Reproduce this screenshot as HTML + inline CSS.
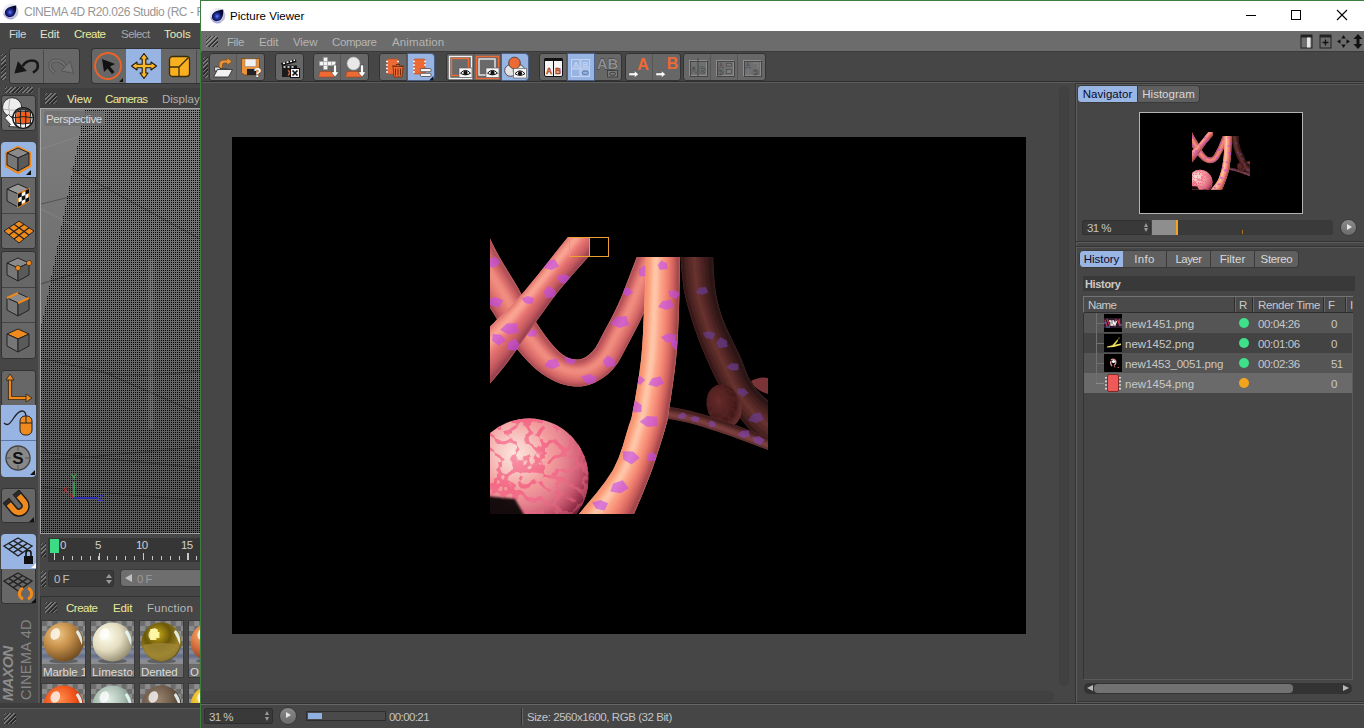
<!DOCTYPE html>
<html><head><meta charset="utf-8">
<style>
*{box-sizing:border-box;margin:0;padding:0}
html,body{width:1364px;height:728px;overflow:hidden;background:#464646;font-family:"Liberation Sans",sans-serif;font-size:11.5px;color:#d0d0d0}
.a{position:absolute}
.t{position:absolute;white-space:nowrap;line-height:14px}
.grip{position:absolute;background:repeating-linear-gradient(135deg,#2a2a2a 0 1px,#777 1px 2px,#464646 2px 3px)}
.btn{position:absolute;background:#676767;border:1px solid #333;border-radius:3px}
.hl{background:#98b4e3}
.tab{position:absolute;height:18px;line-height:16px;background:#5f5f5f;border:1px solid #3a3a3a;font-size:11.5px;white-space:nowrap;text-align:center;color:#d8d8d8}
.tab.on{background:#9ab6e4;color:#0a0a2a}
</style></head><body>

<!-- ================= MAIN C4D WINDOW (behind) ================= -->
<div id="main" class="a" style="left:0;top:0;width:200px;height:728px;overflow:hidden;background:#464646">
  <div class="a" style="left:0;top:0;width:200px;height:23px;background:#fff"></div>
  <div class="t" style="left:24px;top:5px;font-size:12px;color:#969696;letter-spacing:-0.44px/*fit*/">CINEMA 4D R20.026 Studio (RC - R20)</div>
  <div class="a" style="left:0;top:23px;width:200px;height:23px;background:#464646"></div>
  <div class="t" style="left:9px;top:27px;color:#d4d4d4;letter-spacing:-0.41px/*fit*/">File</div>
  <div class="t" style="left:40px;top:27px;color:#e2e2c8;letter-spacing:-0.15px/*fit*/">Edit</div>
  <div class="t" style="left:74px;top:27px;color:#eaea9a;letter-spacing:-0.5px/*fit*/">Create</div>
  <div class="t" style="left:121px;top:27px;color:#a8a8a8;letter-spacing:-0.54px/*fit*/">Select</div>
  <div class="t" style="left:164px;top:27px;color:#eaeab4;letter-spacing:-0.04px/*fit*/">Tools</div>

  <!-- title icon -->
  <svg class="a" style="left:1.500px;top:2.500px" width="17" height="17" viewBox="0 0 18 18"><defs><radialGradient id="c4a" cx="45%" cy="58%" r="55%"><stop offset="0" stop-color="#6a86f0"/><stop offset=".3" stop-color="#2a3cb0"/><stop offset=".7" stop-color="#0c1050"/><stop offset="1" stop-color="#05062a"/></radialGradient><linearGradient id="c4r" x1="0" y1="0" x2="1" y2="1"><stop offset="0" stop-color="#fff"/><stop offset=".5" stop-color="#d8d8e4"/><stop offset="1" stop-color="#b0b0c8"/></linearGradient></defs><circle cx="9" cy="9" r="8.300" fill="url(#c4r)"/><path d="M2 11 A7.500 7.500 0 0 0 12 16" fill="none" stroke="#9a9ae0" stroke-width="1.600" opacity=".8"/><path d="M15 2.600 C15.600 7.500 14.500 13.500 9.300 14.900 C5 15.900 2.300 12.300 3.300 8.600 C4.400 4.800 9.500 3.600 15 2.600 Z" fill="url(#c4a)"/></svg>
  <!-- toolbar -->
  <div class="grip" style="left:1px;top:54px;width:5px;height:26px"></div>
  <div class="btn" style="left:9px;top:48px;width:71px;height:36px"></div>
  <div class="a" style="left:43px;top:50px;width:1px;height:33px;background:#4a4a4a"></div>
  <svg class="a" style="left:13px;top:55px" width="28" height="24" viewBox="0 0 28 24"><path d="M9.700 11 Q13 5.500 19 5.500 T24.800 11 Q25.200 14.500 20 17.700" fill="none" stroke="#161616" stroke-width="2.600"/><path d="M1.400 18.400 L4.900 6.300 L13.800 15.900 Z" fill="#161616"/></svg>
  <svg class="a" style="left:47px;top:55px" width="28" height="24" viewBox="0 0 28 24"><g transform="translate(28 0) scale(-1 1)"><path d="M9.700 11 Q13 5.500 19 5.500 T24.800 11 Q25.200 14.500 20 17.700" fill="none" stroke="#505050" stroke-width="3.400"/><path d="M9.700 11 Q13 5.500 19 5.500 T24.800 11 Q25.200 14.500 20 17.700" fill="none" stroke="#727272" stroke-width="1.800"/><path d="M1.400 18.400 L4.900 6.300 L13.800 15.900 Z" fill="#727272" stroke="#505050" stroke-width=".9"/></g></svg>
  <div class="btn" style="left:91px;top:48px;width:120px;height:36px;border-right:none;border-radius:4px 0 0 4px"></div>
  <div class="a hl" style="left:126px;top:49px;width:35px;height:34px"></div>
  <div class="a" style="left:196px;top:50px;width:1px;height:33px;background:#4a4a4a"></div>
  <svg class="a" style="left:93px;top:51px" width="32" height="32" viewBox="0 0 32 32"><circle cx="15" cy="15" r="13" fill="none" stroke="#e8632a" stroke-width="2"/><path d="M9 8 L22 13 L17 15.5 L21.5 21 L19 23 L14.5 17.5 L11 21 Z" fill="#111"/><path d="M30 27 L30 31 L26 31 Z" fill="#111"/></svg>
  <svg class="a" style="left:131px;top:53.300px" width="26" height="26" viewBox="0 0 26 26"><path d="M13 .5 L17 6 L14.800 6 L14.800 11.200 L20 11.200 L20 9 L25.500 13 L20 17 L20 14.800 L14.800 14.800 L14.800 20 L17 20 L13 25.500 L9 20 L11.200 20 L11.200 14.800 L6 14.800 L6 17 L.5 13 L6 9 L6 11.200 L11.200 11.200 L11.200 6 L9 6 Z" fill="#fbb826" stroke="#1e1a10" stroke-width="1.1" stroke-linejoin="round"/></svg>
  <svg class="a" style="left:168px;top:55px" width="24" height="24" viewBox="0 0 24 24"><rect x="1.5" y="1.5" width="20" height="20" rx="3" fill="#f9b020" stroke="#3a2c08" stroke-width="1.3"/><path d="M2 12 H11 V22 M11 12 L20 3" fill="none" stroke="#3a2c08" stroke-width="1.3"/></svg>

  <!-- left palette -->
  <div class="grip" style="left:5px;top:87px;width:28px;height:6px"></div>
  <div class="btn" style="left:1px;top:95px;width:35px;height:36px"></div>
  <svg class="a" style="left:1px;top:95px" width="35" height="36" viewBox="0 0 35 36"><circle cx="11.100" cy="12.300" r="9.600" fill="#ededed" stroke="#2a2a2a" stroke-width="1"/><path d="M9 3 Q6.500 12 9 21.500 M1.800 14 Q11 16.500 20.500 14" fill="none" stroke="#b4b4b4" stroke-width="1"/><path d="M3.600 23 L7.500 19.500 L13.500 25.500 L15.500 23.500 L16 32 L7.500 31.500 L9.500 29.500 Z" fill="#f6f6f6" stroke="#2a2a2a" stroke-width=".9"/><clipPath id="glb"><circle cx="22.100" cy="23" r="10"/></clipPath><circle cx="22.100" cy="23" r="10.300" fill="#f2f2f2" stroke="#161616" stroke-width="1.300"/><g clip-path="url(#glb)"><path d="M15.500 17.500 Q22 15.500 28.700 17.500 L29.500 27.500 Q22 29.500 14.700 27.500 Z" fill="#f0601c"/><path d="M12 17.800 Q22 14.500 32.200 17.800 M11.500 22.800 Q22 20.500 32.700 22.800 M12 27.800 Q22 30 32.200 27.800 M15.500 13 Q13 23 15.500 33 M19.800 12.500 Q18.800 23 19.800 33.500 M24.400 12.500 Q25.400 23 24.400 33.500 M28.700 13 Q31.200 23 28.700 33" fill="none" stroke="#1c1c1c" stroke-width="1"/><path d="M14 14 Q22 10 30 14 L28 16.500 Q22 14 16 16.500 Z" fill="#333"/></g></svg>

  <div class="btn" style="left:1px;top:142px;width:35px;height:107px"></div>
  <div class="a hl" style="left:1px;top:142px;width:35px;height:35px;border-radius:4px 4px 0 0"></div>
  <div class="a" style="left:2px;top:177px;width:33px;height:1px;background:#444"></div>
  <div class="a" style="left:2px;top:213px;width:33px;height:1px;background:#444"></div>
  <svg class="a" style="left:4px;top:145px" width="28" height="30" viewBox="0 0 28 30"><path d="M14 2 L26 8 L26 21 L14 28 L2 21 L2 8 Z" fill="none" stroke="#f08a1c" stroke-width="2.2"/><path d="M14 3 L25 8 L14 13 L3 8 Z" fill="#8a8a8a" stroke="#222" stroke-width="1"/><path d="M3 8 L14 13 L14 26 L3 20 Z" fill="#777" stroke="#222" stroke-width="1"/><path d="M25 8 L14 13 L14 26 L25 20 Z" fill="#5a5a5a" stroke="#222" stroke-width="1"/><path d="M27 25 L27 30 L22 30 Z" fill="#111"/></svg>
  <svg class="a" style="left:4px;top:181px" width="28" height="30" viewBox="0 0 28 30"><path d="M14 3 L25 8 L14 13 L3 8 Z" fill="#999" stroke="#222" stroke-width="1"/><path d="M3 8 L14 13 L14 26 L3 20 Z" fill="#7a7a7a" stroke="#222" stroke-width="1"/><path d="M25 8 L14 13 L14 26 L25 20 Z" fill="#fff" stroke="#222" stroke-width="1"/><path d="M25 8 L14 13 L14 26 L25 20 Z" fill="#fff" stroke="#f08a1c" stroke-width="1.6"/><path d="M14 13 L17.7 11.3 L17.7 15.6 L14 17.3 Z M21.4 9.6 L25 8 L25 12 L21.4 14 Z M17.7 15.6 L21.4 14 L21.4 18 L17.7 20 Z M14 21.6 L17.7 20 L17.7 24 L14 26 Z M21.4 18 L25 16 L25 20 L21.4 22 Z" fill="#111"/></svg>
  <svg class="a" style="left:3px;top:219px" width="32" height="26" viewBox="0 0 32 26"><path d="M16 2 L31 12 L16 24 L1 12 Z" fill="#f08a1c" stroke="#222" stroke-width="1"/><path d="M6 8.7 L21 20 M11 5.3 L26 16 M26 8.7 L11 20 M21 5.3 L6 16" stroke="#222" stroke-width="1.3" fill="none"/></svg>

  <div class="btn" style="left:1px;top:251px;width:35px;height:108px"></div>
  <div class="a" style="left:2px;top:287px;width:33px;height:1px;background:#444"></div>
  <div class="a" style="left:2px;top:322px;width:33px;height:1px;background:#444"></div>
  <svg class="a" style="left:4px;top:255px" width="30" height="30" viewBox="0 0 30 30"><path d="M14 3 L25 8 L14 13 L3 8 Z" fill="#8a8a8a" stroke="#222" stroke-width="1"/><path d="M3 8 L14 13 L14 26 L3 20 Z" fill="#777" stroke="#222" stroke-width="1"/><path d="M25 8 L14 13 L14 26 L25 20 Z" fill="#5a5a5a" stroke="#222" stroke-width="1"/><circle cx="14" cy="13" r="2.6" fill="#f08a1c" stroke="#222" stroke-width=".6"/><circle cx="25" cy="8" r="2.6" fill="#f08a1c" stroke="#222" stroke-width=".6"/></svg>
  <svg class="a" style="left:4px;top:290px" width="28" height="30" viewBox="0 0 28 30"><path d="M14 3 L25 8 L14 13 L3 8 Z" fill="#8a8a8a" stroke="#222" stroke-width="1"/><path d="M3 8 L14 13 L14 26 L3 20 Z" fill="#777" stroke="#222" stroke-width="1"/><path d="M25 8 L14 13 L14 26 L25 20 Z" fill="#5a5a5a" stroke="#222" stroke-width="1"/><path d="M3 8 L14 3 M14 13 L25 8" stroke="#f08a1c" stroke-width="2"/></svg>
  <svg class="a" style="left:4px;top:326px" width="28" height="30" viewBox="0 0 28 30"><path d="M14 3 L25 8 L14 13 L3 8 Z" fill="#f08a1c" stroke="#222" stroke-width="1"/><path d="M3 8 L14 13 L14 26 L3 20 Z" fill="#777" stroke="#222" stroke-width="1"/><path d="M25 8 L14 13 L14 26 L25 20 Z" fill="#5a5a5a" stroke="#222" stroke-width="1"/></svg>

  <div class="btn" style="left:1px;top:370px;width:35px;height:107px"></div>
  <div class="a hl" style="left:1px;top:405px;width:35px;height:72px;border-radius:0 0 4px 4px"></div>
  <div class="a" style="left:1px;top:440px;width:35px;height:1px;background:#5a77a8"></div>
  <svg class="a" style="left:4px;top:373px" width="30" height="30" viewBox="0 0 30 30"><path d="M6 5 V25 H24" fill="none" stroke="#222" stroke-width="4.2"/><path d="M6 5 V25 H24" fill="none" stroke="#f08a1c" stroke-width="2.4"/><path d="M6 1 L10 7 L2 7 Z M28 25 L22 21 L22 29 Z" fill="#f08a1c" stroke="#222" stroke-width=".8"/></svg>
  <svg class="a" style="left:3px;top:408px" width="32" height="30" viewBox="0 0 32 30"><path d="M1 15 C8 22 11 3 19 3 C22 3 23 6 23 9" fill="none" stroke="#222" stroke-width="1.3"/><rect x="17" y="8" width="12" height="19" rx="5" fill="#f08a1c" stroke="#222" stroke-width="1"/><path d="M17 15 H29 M23 8 V15" stroke="#222" stroke-width="1"/></svg>
  <svg class="a" style="left:4px;top:443px" width="32" height="32" viewBox="0 0 32 32"><circle cx="14" cy="15" r="12" fill="#888" stroke="#444" stroke-width="1.4"/><path d="M14 3 V8 M14 22 V27 M2 15 H7 M21 15 H26" stroke="#555" stroke-width="1"/><text x="14" y="21" font-family="Liberation Sans" font-weight="bold" font-size="17" text-anchor="middle" fill="#111">S</text><path d="M31 27 L31 32 L26 32 Z" fill="#111"/></svg>

  <div class="btn" style="left:1px;top:488px;width:35px;height:35px"></div>
  <svg class="a" style="left:3px;top:490px" width="32" height="32" viewBox="0 0 32 32"><g transform="rotate(-40 16 16)"><path d="M6 4 V16 a10 10 0 0 0 20 0 V4 H19 V16 a3 3 0 0 1 -6 0 V4 Z" fill="#f08a1c" stroke="#1a1a1a" stroke-width="1.4"/><path d="M6 4 H13 V8 H6 Z M19 4 H26 V8 H19 Z" fill="#2a2a2a"/></g><path d="M31 27 L31 32 L26 32 Z" fill="#111"/></svg>

  <div class="btn" style="left:1px;top:534px;width:35px;height:70px"></div>
  <div class="a hl" style="left:1px;top:534px;width:35px;height:35px;border-radius:4px 4px 0 0"></div>
  <svg class="a" style="left:2px;top:536px" width="34" height="32" viewBox="0 0 34 32"><path d="M16 2 L30 10 L16 20 L2 10 Z M6.7 7.3 L20.7 16.7 M11.3 4.7 L25.3 13.3 M25.3 7.3 L11.3 16.7 M20.7 4.7 L6.7 13.3" fill="none" stroke="#222" stroke-width="1.4"/><rect x="22" y="20" width="9" height="8" fill="#111"/><path d="M24 20 V17 a2.5 2.5 0 0 1 5 0 V20" fill="none" stroke="#111" stroke-width="1.6"/><path d="M34 27 L34 32 L29 32 Z" fill="#fff"/></svg>
  <svg class="a" style="left:2px;top:571px" width="34" height="32" viewBox="0 0 34 32"><path d="M16 2 L30 10 L16 20 L2 10 Z M6.7 7.3 L20.7 16.7 M11.3 4.7 L25.3 13.3 M25.3 7.3 L11.3 16.7 M20.7 4.7 L6.7 13.3" fill="none" stroke="#222" stroke-width="1.4"/><path d="M21 17 a6 6 0 0 0 0 11 M26 17 a6 6 0 0 1 0 11" fill="none" stroke="#f08a1c" stroke-width="3"/><path d="M34 27 L34 32 L29 32 Z" fill="#111"/></svg>

  <!-- MAXON logo -->
  <div class="a" style="left:0;top:618px;width:38px;height:84px">
    <div class="t" style="left:1px;top:83px;transform-origin:0 0;transform:rotate(-90deg);font-size:15.5px;font-weight:bold;font-style:italic;color:#8c8c8c;letter-spacing:-.6px">MAXON</div>
    <div class="t" style="left:19px;top:82px;transform-origin:0 0;transform:rotate(-90deg);font-size:14.5px;color:#858585;letter-spacing:.3px">CINEMA 4D</div>
  </div>

  <!-- viewport panel --><div class="a" style="left:38px;top:88px;width:2px;height:616px;background:#565656"></div>
  <div class="a" style="left:40px;top:88px;width:160px;height:20px;background:#3e3e3e"></div>
  <div class="grip" style="left:45px;top:93px;width:12px;height:11px"></div>
  <div class="t" style="left:67px;top:92px;color:#eaeab0;letter-spacing:-0.09px/*fit*/">View</div>
  <div class="t" style="left:105px;top:92px;color:#eaea9a;letter-spacing:-0.6px/*fit*/">Cameras</div>
  <div class="t" style="left:162px;top:92px;color:#b0b0b0">Display</div>
  <div class="a" style="left:40px;top:108px;width:160px;height:426px;background:linear-gradient(#7e7e7e,#585858);border-left:1px solid #a8a8a8;border-top:1px solid #a8a8a8;border-bottom:1px solid #a0a0a0"></div>
  <svg class="a" style="left:41px;top:109px" width="159" height="424" shape-rendering="crispEdges"><defs><pattern id="dots" width="2" height="2" patternUnits="userSpaceOnUse"><rect x="0" y="1" width="1" height="1" fill="#000"/></pattern></defs><path d="M44 0 H159 V424 H0 V218 Z" fill="url(#dots)"/><g shape-rendering="auto" fill="none"><path d="M0 249 Q30 256 60 263 T159 262 M60 262 L159 305 M0 343 L159 359 M0 352 L159 338 M0 378 L159 392 M30 60 L159 130 M0 95 L70 78 M0 175 L50 160" stroke="#000" stroke-opacity=".28" stroke-width="1.2"/><path d="M110 150 V320" stroke="#aaa" stroke-opacity=".18" stroke-width="5"/><path d="M0 40 L60 20 M0 100 L40 120" stroke="#999" stroke-opacity=".5" stroke-width=".8"/></g></svg>
  <div class="a" style="left:44px;top:111px;width:60px;height:15px;background:rgba(110,110,110,.75);border-radius:2px"></div>
  <div class="t" style="left:46px;top:112px;color:#dadada;letter-spacing:-0.39px/*fit*/">Perspective</div>
  <!-- axis gizmo -->
  <svg class="a" style="left:58px;top:470px" width="50" height="34" viewBox="0 0 50 34"><path d="M16 28 V12" stroke="#20c040" stroke-width="1.4"/><path d="M16 28 H40" stroke="#2828d0" stroke-width="1.6"/><path d="M16 28 L12 24" stroke="#c02020" stroke-width="1.4"/><text x="13" y="10" font-size="9" fill="#20c040" font-family="Liberation Sans">Y</text><text x="4" y="23" font-size="9" fill="#c02020" font-family="Liberation Sans">X</text><text x="40" y="31" font-size="9" fill="#3030e0" font-family="Liberation Sans">Z</text></svg>

  <!-- timeline -->
  <div class="grip" style="left:41px;top:543px;width:5px;height:14px"></div>
  <div class="a" style="left:48px;top:538px;width:152px;height:24px;background:#363636"></div>
  <div class="a" style="left:50px;top:539px;width:9px;height:14px;background:#3ddc84"></div>
  <div class="a" style="left:54px;top:556px;width:146px;height:4px;background:repeating-linear-gradient(90deg,#c8c8c8 0 1px,transparent 1px 8.9px)"></div><div class="a" style="left:54px;top:553px;width:146px;height:7px;background:repeating-linear-gradient(90deg,#c8c8c8 0 1px,transparent 1px 44.5px)"></div>
  <div class="t" style="left:60px;top:538px;color:#d0d0d0">0</div>
  <div class="t" style="left:95px;top:538px;color:#d0d0d0">5</div>
  <div class="t" style="left:136px;top:538px;color:#d0d0d0;letter-spacing:-0.53px/*fit*/">10</div>
  <div class="t" style="left:181px;top:538px;color:#d0d0d0;letter-spacing:-0.6px/*fit*/">15</div>
  <div class="grip" style="left:41px;top:571px;width:5px;height:16px"></div>
  <div class="a" style="left:48px;top:570px;width:66px;height:17px;background:#3a3a3a;border:1px solid #333;border-radius:2px"></div>
  <div class="t" style="left:54px;top:572px;color:#c0c0c0;letter-spacing:-0.57px/*fit*/">0 F</div>
  <div class="a" style="left:106px;top:574px;width:0;height:0;border:3px solid transparent;border-bottom:4px solid #999;border-top:none"></div>
  <div class="a" style="left:106px;top:580px;width:0;height:0;border:3px solid transparent;border-top:4px solid #999;border-bottom:none"></div>
  <div class="a" style="left:120px;top:569px;width:90px;height:18px;background:#6e6e6e;border:1px solid #3a3a3a;border-radius:4px"></div>
  <div class="a" style="left:125px;top:574px;width:0;height:0;border:4px solid transparent;border-right:7px solid #c0c0c0;border-left:none"></div>
  <div class="t" style="left:137px;top:572px;color:#9a9a9a;letter-spacing:-0.57px/*fit*/">0 F</div>

  <!-- material manager -->
  <div class="a" style="left:40px;top:596px;width:160px;height:108px;background:#464646;border-left:1px solid #333;border-top:1px solid #333"></div>
  <div class="grip" style="left:45px;top:602px;width:12px;height:11px"></div>
  <div class="t" style="left:66px;top:601px;color:#eaea9a;letter-spacing:-0.5px/*fit*/">Create</div>
  <div class="t" style="left:113px;top:601px;color:#eaea9a;letter-spacing:-0.15px/*fit*/">Edit</div>
  <div class="t" style="left:147px;top:601px;color:#b8b8b8;letter-spacing:0.24px/*fit*/">Function</div>
<svg width="0" height="0" style="position:absolute"><defs>
<pattern id="chk" width="10" height="10" patternUnits="userSpaceOnUse"><rect width="10" height="10" fill="#8c8c8c"/><rect width="5" height="5" fill="#6c6c6c"/><rect x="5" y="5" width="5" height="5" fill="#6c6c6c"/></pattern>
<linearGradient id="flr" x1="0" y1="0" x2="0" y2="1"><stop offset="0" stop-color="#66708a"/><stop offset=".25" stop-color="#868c9c"/><stop offset=".5" stop-color="#626c86"/><stop offset=".75" stop-color="#8a8e9a"/><stop offset="1" stop-color="#8a8a8a"/></linearGradient>
<radialGradient id="m1" cx="35%" cy="30%" r="75%"><stop offset="0" stop-color="#f0c88a"/><stop offset=".45" stop-color="#c8924c"/><stop offset="1" stop-color="#6e4a1e"/></radialGradient>
<radialGradient id="m2" cx="35%" cy="35%" r="75%"><stop offset="0" stop-color="#fffff0"/><stop offset=".5" stop-color="#e4dcc0"/><stop offset="1" stop-color="#8a8268"/></radialGradient>
<radialGradient id="m3" cx="40%" cy="30%" r="80%"><stop offset="0" stop-color="#c8a81c"/><stop offset=".4" stop-color="#6a5808"/><stop offset=".7" stop-color="#9a8028"/><stop offset="1" stop-color="#3a3004"/></radialGradient>
<radialGradient id="m4" cx="35%" cy="30%" r="75%"><stop offset="0" stop-color="#f8c070"/><stop offset=".5" stop-color="#d87040"/><stop offset="1" stop-color="#7a3418"/></radialGradient>
<radialGradient id="m5" cx="40%" cy="35%" r="75%"><stop offset="0" stop-color="#ff9050"/><stop offset=".5" stop-color="#f0541a"/><stop offset="1" stop-color="#8a2a08"/></radialGradient>
<radialGradient id="m6" cx="40%" cy="35%" r="75%"><stop offset="0" stop-color="#e0ece4"/><stop offset=".5" stop-color="#a8bcb0"/><stop offset="1" stop-color="#5a6a62"/></radialGradient>
<radialGradient id="m7" cx="40%" cy="35%" r="75%"><stop offset="0" stop-color="#9a8672"/><stop offset=".5" stop-color="#6e5a48"/><stop offset="1" stop-color="#32281e"/></radialGradient>
<radialGradient id="m8" cx="40%" cy="35%" r="75%"><stop offset="0" stop-color="#fff080"/><stop offset=".5" stop-color="#e8b820"/><stop offset="1" stop-color="#8a6008"/></radialGradient>
</defs></svg>
<div class="a" style="left:41px;top:620px;width:45px;height:58px;overflow:hidden;border:1px solid #3a3a3a"><svg class="a" style="left:0;top:0" width="43" height="56" viewBox="0 0 42 56" preserveAspectRatio="none"><rect width="42" height="56" fill="url(#chk)"/><rect y="27" width="42" height="16" fill="url(#flr)"/><ellipse cx="21" cy="40" rx="14" ry="2.5" fill="#444" opacity=".6"/><circle cx="21" cy="21" r="19.4" fill="url(#m1)"/><ellipse cx="13" cy="13" rx="4.5" ry="6" fill="#fff" opacity=".75" transform="rotate(20 13 13)"/><path d="M35 9 Q40.5 15 39 24 Q36 16 33 11 Z" fill="#e8f8f8" opacity=".9"/></svg><div class="a" style="left:0;top:43px;width:43px;height:14px;background:#6a6a6a"></div><div class="t" style="left:1px;top:44px;color:#dcdcdc;font-size:11.5px;letter-spacing:.1px;letter-spacing:-0.08px/*fit*/">Marble 1</div></div><div class="a" style="left:90px;top:620px;width:45px;height:58px;overflow:hidden;border:1px solid #3a3a3a"><svg class="a" style="left:0;top:0" width="43" height="56" viewBox="0 0 42 56" preserveAspectRatio="none"><rect width="42" height="56" fill="url(#chk)"/><rect y="27" width="42" height="16" fill="url(#flr)"/><ellipse cx="21" cy="40" rx="14" ry="2.5" fill="#444" opacity=".6"/><circle cx="21" cy="21" r="19.4" fill="url(#m2)"/><ellipse cx="13" cy="13" rx="4.5" ry="6" fill="#fff" opacity=".75" transform="rotate(20 13 13)"/><path d="M35 9 Q40.5 15 39 24 Q36 16 33 11 Z" fill="#e8f8f8" opacity=".9"/></svg><div class="a" style="left:0;top:43px;width:43px;height:14px;background:#6a6a6a"></div><div class="t" style="left:1px;top:44px;color:#dcdcdc;font-size:11.5px;letter-spacing:.1px">Limestone</div></div><div class="a" style="left:139px;top:620px;width:45px;height:58px;overflow:hidden;border:1px solid #3a3a3a"><svg class="a" style="left:0;top:0" width="43" height="56" viewBox="0 0 42 56" preserveAspectRatio="none"><rect width="42" height="56" fill="url(#chk)"/><rect y="27" width="42" height="16" fill="url(#flr)"/><ellipse cx="21" cy="40" rx="14" ry="2.5" fill="#444" opacity=".6"/><circle cx="21" cy="21" r="19.4" fill="url(#m3)"/><ellipse cx="13" cy="13" rx="4.5" ry="6" fill="#fff" opacity=".75" transform="rotate(20 13 13)"/><path d="M35 9 Q40.5 15 39 24 Q36 16 33 11 Z" fill="#e8f8f8" opacity=".9"/><path d="M3 24 Q21 20 39 24 Q36 38 21 40.4 Q6 38 3 24 Z" fill="#a08838" opacity=".75"/><path d="M10 8 h7 v3 h2 v6 h-3 v2 h-6 Z" fill="#fff8a0" opacity=".95"/></svg><div class="a" style="left:0;top:43px;width:43px;height:14px;background:#6a6a6a"></div><div class="t" style="left:1px;top:44px;color:#dcdcdc;font-size:11.5px;letter-spacing:.1px;letter-spacing:-0.09px/*fit*/">Dented</div></div><div class="a" style="left:188px;top:620px;width:45px;height:58px;overflow:hidden;border:1px solid #3a3a3a"><svg class="a" style="left:0;top:0" width="43" height="56" viewBox="0 0 42 56" preserveAspectRatio="none"><rect width="42" height="56" fill="url(#chk)"/><rect y="27" width="42" height="16" fill="url(#flr)"/><ellipse cx="21" cy="40" rx="14" ry="2.5" fill="#444" opacity=".6"/><circle cx="21" cy="21" r="19.4" fill="url(#m4)"/><ellipse cx="13" cy="13" rx="4.5" ry="6" fill="#fff" opacity=".75" transform="rotate(20 13 13)"/><path d="M35 9 Q40.5 15 39 24 Q36 16 33 11 Z" fill="#e8f8f8" opacity=".9"/></svg><div class="a" style="left:0;top:43px;width:43px;height:14px;background:#6a6a6a"></div><div class="t" style="left:1px;top:44px;color:#dcdcdc;font-size:11.5px;letter-spacing:.1px">O</div></div><div class="a" style="left:41px;top:683px;width:45px;height:21px;overflow:hidden;border:1px solid #3a3a3a"><svg class="a" style="left:0;top:0" width="43" height="56" viewBox="0 0 42 56" preserveAspectRatio="none"><rect width="42" height="56" fill="url(#chk)"/><rect y="27" width="42" height="16" fill="url(#flr)"/><ellipse cx="21" cy="40" rx="14" ry="2.5" fill="#444" opacity=".6"/><circle cx="21" cy="21" r="19.4" fill="url(#m5)"/><ellipse cx="13" cy="13" rx="4.5" ry="6" fill="#fff" opacity=".75" transform="rotate(20 13 13)"/><path d="M35 9 Q40.5 15 39 24 Q36 16 33 11 Z" fill="#e8f8f8" opacity=".9"/></svg></div><div class="a" style="left:90px;top:683px;width:45px;height:21px;overflow:hidden;border:1px solid #3a3a3a"><svg class="a" style="left:0;top:0" width="43" height="56" viewBox="0 0 42 56" preserveAspectRatio="none"><rect width="42" height="56" fill="url(#chk)"/><rect y="27" width="42" height="16" fill="url(#flr)"/><ellipse cx="21" cy="40" rx="14" ry="2.5" fill="#444" opacity=".6"/><circle cx="21" cy="21" r="19.4" fill="url(#m6)"/><ellipse cx="13" cy="13" rx="4.5" ry="6" fill="#fff" opacity=".75" transform="rotate(20 13 13)"/><path d="M35 9 Q40.5 15 39 24 Q36 16 33 11 Z" fill="#e8f8f8" opacity=".9"/></svg></div><div class="a" style="left:139px;top:683px;width:45px;height:21px;overflow:hidden;border:1px solid #3a3a3a"><svg class="a" style="left:0;top:0" width="43" height="56" viewBox="0 0 42 56" preserveAspectRatio="none"><rect width="42" height="56" fill="url(#chk)"/><rect y="27" width="42" height="16" fill="url(#flr)"/><ellipse cx="21" cy="40" rx="14" ry="2.5" fill="#444" opacity=".6"/><circle cx="21" cy="21" r="19.4" fill="url(#m7)"/><ellipse cx="13" cy="13" rx="4.5" ry="6" fill="#fff" opacity=".75" transform="rotate(20 13 13)"/><path d="M35 9 Q40.5 15 39 24 Q36 16 33 11 Z" fill="#e8f8f8" opacity=".9"/></svg></div><div class="a" style="left:188px;top:683px;width:45px;height:21px;overflow:hidden;border:1px solid #3a3a3a"><svg class="a" style="left:0;top:0" width="43" height="56" viewBox="0 0 42 56" preserveAspectRatio="none"><rect width="42" height="56" fill="url(#chk)"/><rect y="27" width="42" height="16" fill="url(#flr)"/><ellipse cx="21" cy="40" rx="14" ry="2.5" fill="#444" opacity=".6"/><circle cx="21" cy="21" r="19.4" fill="url(#m8)"/><ellipse cx="13" cy="13" rx="4.5" ry="6" fill="#fff" opacity=".75" transform="rotate(20 13 13)"/><path d="M35 9 Q40.5 15 39 24 Q36 16 33 11 Z" fill="#e8f8f8" opacity=".9"/></svg></div>
  <div class="a" style="left:0;top:703px;width:200px;height:25px;background:#464646;border-top:5px solid #3d3d3d"></div><div class="a" style="left:0;top:708px;width:200px;height:1px;background:#5a5a5a"></div>
  <div class="grip" style="left:4px;top:713px;width:12px;height:11px"></div>

</div>

<!-- ================= PICTURE VIEWER WINDOW ================= -->
<div id="pv" class="a" style="left:200px;top:0;width:1164px;height:728px;background:#464646;border-left:1px solid #3d7d3d;border-top:1px solid #3d7d3d">
</div>
<div class="a" style="left:201px;top:1px;width:1163px;height:30px;background:#fff"></div>
<div class="t" style="left:230px;top:9px;font-size:11.5px;color:#000;letter-spacing:0.03px/*fit*/">Picture Viewer</div>
<div class="a" style="left:201px;top:31px;width:1163px;height:21px;background:#6c6c6c"></div>
<div class="a" style="left:201px;top:52px;width:1163px;height:30px;background:#464646"></div>


<!-- PV title -->
<svg class="a" style="left:208.500px;top:6.500px" width="17" height="17" viewBox="0 0 18 18"><circle cx="9" cy="9" r="8.300" fill="url(#c4r)"/><path d="M2 11 A7.500 7.500 0 0 0 12 16" fill="none" stroke="#9a9ae0" stroke-width="1.600" opacity=".8"/><path d="M15 2.600 C15.600 7.500 14.500 13.500 9.300 14.900 C5 15.900 2.300 12.300 3.300 8.600 C4.400 4.800 9.500 3.600 15 2.600 Z" fill="url(#c4a)"/></svg>
<svg class="a" style="left:1240px;top:6px" width="120" height="20" viewBox="0 0 120 20"><path d="M6 9.5 H16" stroke="#000" stroke-width="1"/><rect x="51.5" y="4.5" width="9" height="9" fill="none" stroke="#000" stroke-width="1"/><path d="M97 4 L107 14 M107 4 L97 14" stroke="#000" stroke-width="1.1"/></svg>
<!-- PV menu -->
<div class="grip" style="left:206px;top:36px;width:12px;height:11px;background:repeating-linear-gradient(135deg,#333 0 1px,#8a8a8a 1px 2px,#6b6b6b 2px 3px)"></div>
<div class="t" style="left:227px;top:35px;color:#b4b4b4;letter-spacing:-0.41px/*fit*/">File</div>
<div class="t" style="left:259px;top:35px;color:#b4b4b4;letter-spacing:-0.15px/*fit*/">Edit</div>
<div class="t" style="left:293px;top:35px;color:#b4b4b4;letter-spacing:-0.09px/*fit*/">View</div>
<div class="t" style="left:332px;top:35px;color:#b4b4b4;letter-spacing:-0.39px/*fit*/">Compare</div>
<div class="t" style="left:392px;top:35px;color:#b4b4b4;letter-spacing:0.14px/*fit*/">Animation</div>
<svg class="a" style="left:1299px;top:32.500px" width="66" height="18" viewBox="0 0 66 18"><rect x="2" y="2" width="11" height="13" fill="#707070" stroke="#222" stroke-width="1"/><rect x="2" y="2" width="11" height="2.5" fill="#222"/><rect x="8" y="4.5" width="3.5" height="10" fill="#e8e8e8"/><rect x="21" y="2" width="11" height="13" fill="#6b6b6b" stroke="#222" stroke-width="1"/><rect x="21" y="2" width="11" height="2.5" fill="#222"/><path d="M23.5 9.5 H29.5 M26.5 6.5 V12.5" stroke="#111" stroke-width="1.3"/><path d="M44.500 2 l2.200 3.500 h-4.400 Z M44.500 15 l2.200 -3.500 h-4.400 Z M38 8.500 l3.500 -2.200 v4.400 Z M51 8.500 l-3.500 -2.200 v4.400 Z" fill="#111"/><path d="M59 1 l4.500 5 h-3 v5 h3 l-4.500 5 l-4.500 -5 h3 v-5 h-3 Z" fill="#111"/></svg>
<!-- PV toolbar separators -->
<div class="a" style="left:202px;top:51px;width:1162px;height:1px;background:#3a3a3a"></div>
<div class="a" style="left:202px;top:81px;width:1162px;height:1px;background:#2e2e2e"></div>
<div class="a" style="left:202px;top:82px;width:1162px;height:1px;background:#5c5c5c"></div>
<div class="grip" style="left:203px;top:57px;width:5px;height:21px"></div>
<div class="btn" style="left:209px;top:53px;width:56px;height:28px"></div><div class="a" style="left:236px;top:54px;width:1px;height:26px;background:#555"></div><svg class="a" style="left:210px;top:53.5px" width="27" height="27" viewBox="0 0 27 27"><path d="M9 14 V11 Q9 6 14 6 H17 V3.5 L22 7.500 L17 11.500 V9 H14.500 Q12.500 9 12.500 11 V14 Z" fill="#e8923c" stroke="#7a4a10" stroke-width=".7"/><path d="M4.500 13 H9 L10 14.500 H17 V17 H4.500 Z" fill="#d8d8d8" stroke="#333" stroke-width=".8"/><path d="M7.500 15.500 H22.500 L18.500 23 H3.500 Z" fill="#f2f2f2" stroke="#333" stroke-width=".9"/></svg><svg class="a" style="left:237px;top:53.5px" width="27" height="27" viewBox="0 0 27 27"><path d="M4.500 4.500 H22.500 V21 H7 L4.500 18.500 Z" fill="#e8923c" stroke="#7a4a10" stroke-width=".9"/><rect x="8" y="5" width="11" height="7.500" fill="#f0f0f0" stroke="#888" stroke-width=".5"/><rect x="10" y="15" width="9" height="6" fill="#222"/><text x="20.500" y="23" font-family="Liberation Sans" font-weight="bold" font-size="13" text-anchor="middle" fill="#fff" stroke="#333" stroke-width=".3" paint-order="stroke">?</text></svg><div class="btn" style="left:275px;top:53px;width:29px;height:28px"></div><svg class="a" style="left:276px;top:53.5px" width="27" height="27" viewBox="0 0 27 27"><path d="M5 9 L19.500 5 L20.500 8 L6 12 Z" fill="#111"/><path d="M7 9.500 l2 -.600 M10.500 8.500 l2 -.600 M14 7.500 l2 -.600 M17.500 6.500 l1.500 -.400" stroke="#fff" stroke-width="1.600"/><rect x="6" y="11.500" width="15" height="3" fill="#111"/><path d="M7.500 13 h2 M11.500 13 h2 M15.500 13 h2" stroke="#fff" stroke-width="1.400"/><rect x="6" y="14" width="14" height="9" fill="#1a1a1a"/><path d="M12 16 a3 3 0 0 1 0 5.500 a4 4 0 0 0 0 -5.500 Z" fill="#ee6a35" stroke="#ee6a35" stroke-width=".8"/><rect x="14.500" y="14.500" width="9" height="9" fill="#f4f4f4" stroke="#111" stroke-width="1"/><path d="M16.500 16.500 l5 5 M21.500 16.500 l-5 5" stroke="#111" stroke-width="1.700"/></svg><div class="btn" style="left:313px;top:53px;width:56px;height:28px"></div><div class="a" style="left:340px;top:54px;width:1px;height:26px;background:#555"></div><svg class="a" style="left:314px;top:53.5px" width="27" height="27" viewBox="0 0 27 27"><g fill="#f4f4f4" stroke="#999" stroke-width=".4"><rect x="9.500" y="3.500" width="4" height="4"/><rect x="5.500" y="7.500" width="4" height="4"/><rect x="9.500" y="7.500" width="4" height="4"/><rect x="13.500" y="7.500" width="4" height="4"/><rect x="17.500" y="7.500" width="4" height="4"/><rect x="9.500" y="11.500" width="4" height="4"/></g><path d="M6 17.500 H18 L21 23 H4.500 Z" fill="#ee6a35" stroke="#a03c10" stroke-width=".5"/><path d="M19.500 11 h3 v7 h2.500 l-4 5 l-4 -5 h2.500 Z" fill="#fff" stroke="#444" stroke-width=".6"/></svg><svg class="a" style="left:341px;top:53.5px" width="27" height="27" viewBox="0 0 27 27"><circle cx="12.500" cy="9.500" r="6.500" fill="#e8e8e8" stroke="#aaa" stroke-width=".5"/><path d="M6 17.500 H18 L21 23 H4.500 Z" fill="#ee6a35" stroke="#a03c10" stroke-width=".5"/><path d="M19.500 11 h3 v7 h2.500 l-4 5 l-4 -5 h2.500 Z" fill="#fff" stroke="#444" stroke-width=".6"/></svg><div class="btn" style="left:379px;top:53px;width:56px;height:28px"></div><div class="a" style="left:406px;top:54px;width:1px;height:26px;background:#555"></div><div class="a hl" style="left:407px;top:53px;width:28px;height:28px;border-radius:0 4px 4px 0;border:1px solid #4a6088"></div><svg class="a" style="left:380px;top:53.5px" width="27" height="27" viewBox="0 0 27 27"><rect x="7" y="5" width="11" height="15" rx="1" fill="#ee6a35" stroke="#b8481c" stroke-width=".6"/><path d="M6 7.5 h2 M6 11 h2 M6 14.5 h2 M6 18 h2 M17 7.5 h2 M17 11 h2" stroke="#f4f4f4" stroke-width="1.300"/><path d="M13 12.500 h10 l-1 10.500 h-8 Z" fill="#ee6a35" stroke="#7a2a08" stroke-width=".8"/><path d="M12 12 h12 M16 10.500 h4" stroke="#7a2a08" stroke-width="1.200"/><path d="M15.500 14.500 v7 M18 14.500 v7 M20.500 14.500 v7" stroke="#7a2a08" stroke-width="1"/></svg><svg class="a" style="left:407px;top:53.5px" width="27" height="27" viewBox="0 0 27 27"><rect x="7" y="5" width="11" height="15" rx="1" fill="#ee6a35" stroke="#b8481c" stroke-width=".6"/><path d="M6 7.5 h2 M6 11 h2 M6 14.5 h2 M6 18 h2 M17 7.5 h2 M17 11 h2" stroke="#f4f4f4" stroke-width="1.300"/><rect x="13.500" y="14.500" width="10.500" height="3.200" rx="1" fill="#f4f4f4" stroke="#333" stroke-width=".7"/><rect x="13.500" y="19.300" width="10.500" height="3.200" rx="1" fill="#f4f4f4" stroke="#333" stroke-width=".7"/><path d="M26.500 22 V26.500 H22 Z" fill="#0a1428"/></svg><div class="btn" style="left:446px;top:53px;width:83px;height:28px"></div><div class="a" style="left:473px;top:54px;width:1px;height:26px;background:#555"></div><div class="a" style="left:500px;top:54px;width:1px;height:26px;background:#555"></div><div class="a hl" style="left:501px;top:53px;width:28px;height:28px;border-radius:0 4px 4px 0;border:1px solid #4a6088"></div><svg class="a" style="left:447px;top:53.5px" width="27" height="27" viewBox="0 0 27 27"><rect x="2.500" y="2.500" width="22" height="22" fill="none" stroke="#f0f0f0" stroke-width="1.400"/><rect x="4.500" y="4.500" width="17" height="17" fill="#6a6a6a" stroke="#ee6a35" stroke-width="1.400"/><rect x="12.0" y="14.0" width="13" height="9.5" fill="#f6f6f6" stroke="#555" stroke-width=".6"/><path d="M13.5 19.2 Q18.5 13.5 23.5 19.2 Q18.5 22.5 13.5 19.2 Z" fill="#fff" stroke="#111" stroke-width="1"/><circle cx="18.5" cy="18.9" r="2.1" fill="#111"/></svg><svg class="a" style="left:474px;top:53.5px" width="27" height="27" viewBox="0 0 27 27"><rect x="2.500" y="2.500" width="22" height="22" fill="none" stroke="#ee6a35" stroke-width="1.400"/><rect x="5" y="5" width="16" height="16" fill="#6a6a6a" stroke="#e8e8e8" stroke-width="1.400"/><rect x="12.0" y="14.0" width="13" height="9.5" fill="#f6f6f6" stroke="#555" stroke-width=".6"/><path d="M13.5 19.2 Q18.5 13.5 23.5 19.2 Q18.5 22.5 13.5 19.2 Z" fill="#fff" stroke="#111" stroke-width="1"/><circle cx="18.5" cy="18.9" r="2.1" fill="#111"/></svg><svg class="a" style="left:501px;top:53.5px" width="27" height="27" viewBox="0 0 27 27"><circle cx="9.500" cy="16.500" r="5.800" fill="#e4e4e4" stroke="#333" stroke-width=".8"/><circle cx="18" cy="16.500" r="5.800" fill="#e4e4e4" stroke="#333" stroke-width=".8"/><circle cx="13.500" cy="9" r="5.800" fill="#ee6a35" stroke="#333" stroke-width=".8"/><rect x="12.5" y="14.5" width="13" height="9.5" fill="#f6f6f6" stroke="#555" stroke-width=".6"/><path d="M14.0 19.7 Q19.0 14.0 24.0 19.7 Q19.0 23.0 14.0 19.7 Z" fill="#fff" stroke="#111" stroke-width="1"/><circle cx="19.0" cy="19.4" r="2.1" fill="#111"/></svg><div class="btn" style="left:539px;top:53px;width:83px;height:28px"></div><div class="a" style="left:566px;top:54px;width:1px;height:26px;background:#555"></div><div class="a" style="left:593px;top:54px;width:1px;height:26px;background:#555"></div><div class="a hl" style="left:567px;top:53px;width:28px;height:28px;border-radius:0;border:1px solid #4a6088"></div><svg class="a" style="left:540px;top:53.5px" width="27" height="27" viewBox="0 0 27 27"><rect x="4.500" y="4.500" width="18" height="18" rx="1.500" fill="#f4f4f4" stroke="#111" stroke-width="1"/><rect x="4.500" y="4" width="18" height="3" fill="#111"/><path d="M13.500 6 V22" stroke="#111" stroke-width="1"/><text x="9" y="19.500" font-family="Liberation Sans" font-weight="bold" font-size="8.5" text-anchor="middle" fill="#ee6a35" stroke="#7a2a10" stroke-width=".35">A</text><text x="18" y="19.500" font-family="Liberation Sans" font-weight="bold" font-size="8.5" text-anchor="middle" fill="#ee6a35" stroke="#7a2a10" stroke-width=".35">B</text></svg><svg class="a" style="left:567px;top:53.5px" width="27" height="27" viewBox="0 0 27 27"><g fill="none" stroke="#c4d4ee" stroke-width="1"><rect x="4.500" y="5.500" width="8.500" height="8.500"/><rect x="14" y="5.500" width="8.500" height="8.500"/><rect x="4.500" y="15" width="8.500" height="7.500"/><rect x="14" y="15" width="8.500" height="7.500"/></g><text x="8.800" y="13" font-family="Liberation Sans" font-weight="bold" font-size="8" text-anchor="middle" fill="#c4d4ee">A</text><text x="18.300" y="13" font-family="Liberation Sans" font-weight="bold" font-size="8" text-anchor="middle" fill="#c4d4ee">B</text><ellipse cx="18.300" cy="18.800" rx="3" ry="1.700" fill="none" stroke="#5a78a8" stroke-width="1"/></svg><svg class="a" style="left:594px;top:53.5px" width="27" height="27" viewBox="0 0 27 27"><text x="13.500" y="14.500" font-family="Liberation Sans" font-weight="bold" font-size="15" text-anchor="middle" fill="#8e8e8e" stroke="#3c3c3c" stroke-width=".8" paint-order="stroke">AB</text><rect x="13.500" y="16.500" width="10" height="6.500" fill="#7c7c7c" stroke="#3c3c3c" stroke-width=".9"/><ellipse cx="18.500" cy="19.800" rx="3" ry="1.600" fill="none" stroke="#3a3a3a" stroke-width="1"/></svg><div class="btn" style="left:625px;top:53px;width:56px;height:28px"></div><div class="a" style="left:652px;top:54px;width:1px;height:26px;background:#555"></div><svg class="a" style="left:626px;top:53.5px" width="27" height="27" viewBox="0 0 27 27"><text x="17" y="15.500" font-family="Liberation Sans" font-weight="bold" font-size="16" text-anchor="middle" fill="#ee6a35">A</text><path d="M3 19 h5.500 v-2 l4 3.200 l-4 3.200 v-2 h-5.500 Z" fill="#fff" stroke="#555" stroke-width=".4"/></svg><svg class="a" style="left:653px;top:53.5px" width="27" height="27" viewBox="0 0 27 27"><text x="19.500" y="14.500" font-family="Liberation Sans" font-weight="bold" font-size="16" text-anchor="middle" fill="#ee6a35">B</text><path d="M3 19 h5.500 v-2 l4 3.200 l-4 3.200 v-2 h-5.500 Z" fill="#fff" stroke="#555" stroke-width=".4"/></svg><div class="btn" style="left:683px;top:53px;width:83px;height:28px"></div><div class="a" style="left:710px;top:54px;width:1px;height:26px;background:#555"></div><div class="a" style="left:737px;top:54px;width:1px;height:26px;background:#555"></div><svg class="a" style="left:684px;top:53.5px" width="27" height="27" viewBox="0 0 27 27"><rect x="5.500" y="6.500" width="17" height="15" fill="#707070" stroke="#8c8c8c" stroke-width="1"/><rect x="6.500" y="7.500" width="17" height="15" fill="none" stroke="#3c3c3c" stroke-width=".8"/><path d="M14 4.500 V23" stroke="#444" stroke-width="1"/><text x="9.500" y="18.500" font-family="Liberation Sans" font-weight="bold" font-size="9" text-anchor="middle" fill="#929292" stroke="#3c3c3c" stroke-width=".5">A</text><text x="18.500" y="18.500" font-family="Liberation Sans" font-weight="bold" font-size="9" text-anchor="middle" fill="#929292" stroke="#3c3c3c" stroke-width=".5">B</text></svg><svg class="a" style="left:711px;top:53.5px" width="27" height="27" viewBox="0 0 27 27"><rect x="5.500" y="6.500" width="17" height="15" fill="#707070" stroke="#8c8c8c" stroke-width="1"/><rect x="6.500" y="7.500" width="17" height="15" fill="none" stroke="#3c3c3c" stroke-width=".8"/><text x="10" y="14" font-family="Liberation Sans" font-weight="bold" font-size="8" text-anchor="middle" fill="#929292" stroke="#3c3c3c" stroke-width=".5">A</text><text x="10" y="21" font-family="Liberation Sans" font-weight="bold" font-size="8" text-anchor="middle" fill="#929292" stroke="#3c3c3c" stroke-width=".5">B</text><rect x="15.500" y="9.500" width="5" height="2.500" fill="#7c7c7c" stroke="#444" stroke-width=".6"/><rect x="15.500" y="15.500" width="5" height="4" fill="#7c7c7c" stroke="#444" stroke-width=".6"/></svg><svg class="a" style="left:738px;top:53.5px" width="27" height="27" viewBox="0 0 27 27"><rect x="5.500" y="6.500" width="17" height="15" fill="#707070" stroke="#8c8c8c" stroke-width="1"/><rect x="6.500" y="7.500" width="17" height="15" fill="none" stroke="#3c3c3c" stroke-width=".8"/><text x="10" y="14" font-family="Liberation Sans" font-weight="bold" font-size="8" text-anchor="middle" fill="#929292" stroke="#3c3c3c" stroke-width=".5">A</text><text x="18" y="21" font-family="Liberation Sans" font-weight="bold" font-size="8" text-anchor="middle" fill="#929292" stroke="#3c3c3c" stroke-width=".5">B</text><path d="M15 9 h5 v5 M10 16 v5 h3" fill="none" stroke="#7c7c7c" stroke-width="1.300"/></svg>
<!-- image area -->
<div class="a" style="left:232px;top:137px;width:794px;height:497px;background:#000"></div>










<!--SCENE--><svg class="a" style="left:232px;top:137px" width="794" height="497" viewBox="232 137 794 497"><defs><filter id="bl2" x="-5%" y="-5%" width="110%" height="110%"><feGaussianBlur stdDeviation=".7"/></filter><filter id="bl" x="-5%" y="-5%" width="110%" height="110%"><feGaussianBlur stdDeviation="1.1"/></filter>
<radialGradient id="sg" cx="38%" cy="30%" r="75%"><stop offset="0" stop-color="#fbdcd0"/><stop offset=".4" stop-color="#f29c9c"/><stop offset=".75" stop-color="#e2607a"/><stop offset="1" stop-color="#a02c50"/></radialGradient>
<radialGradient id="sgs" cx="38%" cy="30%" r="75%"><stop offset="0" stop-color="#fff" stop-opacity=".3"/><stop offset=".4" stop-color="#fff" stop-opacity="0"/><stop offset=".85" stop-color="#400818" stop-opacity=".25"/><stop offset="1" stop-color="#300010" stop-opacity=".6"/></radialGradient>
<radialGradient id="dsg" cx="40%" cy="35%" r="70%"><stop offset="0" stop-color="#6a2c2c"/><stop offset=".7" stop-color="#421818"/><stop offset="1" stop-color="#7a3c3c"/></radialGradient>
<filter id="marb" x="0" y="0" width="100%" height="100%"><feTurbulence type="turbulence" baseFrequency="0.07" numOctaves="2" seed="11" result="n"/><feColorMatrix in="n" type="matrix" values="0 0 0 0 0.90  0 0 0 0 0.14  0 0 0 0 0.24  -13 0 0 0 3.2" result="c"/><feComposite in="c" in2="SourceGraphic" operator="in"/></filter>
<filter id="marbD" x="0" y="0" width="100%" height="100%"><feTurbulence type="turbulence" baseFrequency="0.12" numOctaves="2" seed="3" result="n"/><feColorMatrix in="n" type="matrix" values="0 0 0 0 0.1  0 0 0 0 0.02  0 0 0 0 0.02  -8 0 0 0 2" result="c"/><feComposite in="c" in2="SourceGraphic" operator="in"/></filter>
<clipPath id="rc"><path d="M490 237 H589 V257 H768 V514 H490 Z"/></clipPath><g id="scene" clip-path="url(#rc)"><clipPath id="cpt4"><path d="M680 250 L680.3 254.5 L680.8 260.9 L681.3 268.2 L682 275 L682.7 280.9 L683.4 286.7 L684.4 292.8 L686 300 L688.4 308.7 L691.3 318.4 L694.6 328.4 L698 338 L701.6 347.3 L705.5 356.5 L709.4 365.2 L713 373 L716.2 379.5 L719.1 384.9 L722 389.9 L725 395 L728.2 400.2 L731.4 405.3 L734.7 410.3 L738 415 L741.3 419.4 L744.6 423.6 L748.1 427.8 L752 432 L757 436.9 L762.9 442.1 L768.3 446.7 L772 450 L790 410 L787.2 408.9 L783.1 407.4 L778.8 405.6 L775 404 L772.2 402.7 L769.9 401.6 L767.7 400.2 L765 398 L761.7 394.9 L758.1 391.2 L754.4 386.9 L751 382 L748.2 376.4 L745.6 370.1 L743 363.3 L740 356 L736.2 347.9 L731.8 339 L727.5 330.1 L724 322 L721.4 314.8 L719.4 308.2 L717.8 302 L716.5 296 L715.5 290.5 L714.8 285.4 L714.4 280.4 L714 275 L713.6 268.4 L713.3 261.2 L713.1 254.6 L713 250Z"/></clipPath><path d="M680 250 L680.3 254.5 L680.8 260.9 L681.3 268.2 L682 275 L682.7 280.9 L683.4 286.7 L684.4 292.8 L686 300 L688.4 308.7 L691.3 318.4 L694.6 328.4 L698 338 L701.6 347.3 L705.5 356.5 L709.4 365.2 L713 373 L716.2 379.5 L719.1 384.9 L722 389.9 L725 395 L728.2 400.2 L731.4 405.3 L734.7 410.3 L738 415 L741.3 419.4 L744.6 423.6 L748.1 427.8 L752 432 L757 436.9 L762.9 442.1 L768.3 446.7 L772 450 L790 410 L787.2 408.9 L783.1 407.4 L778.8 405.6 L775 404 L772.2 402.7 L769.9 401.6 L767.7 400.2 L765 398 L761.7 394.9 L758.1 391.2 L754.4 386.9 L751 382 L748.2 376.4 L745.6 370.1 L743 363.3 L740 356 L736.2 347.9 L731.8 339 L727.5 330.1 L724 322 L721.4 314.8 L719.4 308.2 L717.8 302 L716.5 296 L715.5 290.5 L714.8 285.4 L714.4 280.4 L714 275 L713.6 268.4 L713.3 261.2 L713.1 254.6 L713 250Z" fill="#64302d"/><g clip-path="url(#cpt4)"><g filter="url(#bl)"><path d="M679.3 250 L679.7 254.5 L680.1 260.9 L680.7 268.2 L681.4 275 L682 281 L682.7 286.7 L683.8 292.9 L685.4 300.1 L687.8 308.8 L690.8 318.6 L694.1 328.7 L697.5 338.3 L701.1 347.6 L705 356.9 L708.9 365.6 L712.5 373.3 L715.7 379.8 L718.6 385.2 L721.5 390.2 L724.5 395.3 L727.6 400.5 L730.8 405.6 L734.1 410.6 L737.5 415.3 L740.8 419.8 L744.1 424.1 L747.6 428.3 L751.5 432.6 L756.6 437.5 L762.5 442.8 L767.9 447.5 L771.6 450.8 L774.6 444.2 L771 441.3 L765.8 437 L760.2 432.3 L755.3 427.9 L751.6 424.1 L748.2 420.4 L745.1 416.6 L741.9 412.5 L738.6 408 L735.2 403.3 L732 398.3 L728.8 393.1 L725.8 388 L723 382.8 L720.1 377.1 L716.9 370.5 L713.3 362.7 L709.3 354 L705.4 344.8 L701.8 335.7 L698.5 326.4 L695.4 316.9 L692.6 307.7 L690.4 299.4 L688.9 292.5 L687.9 286.5 L687.3 280.9 L686.6 275 L686 268.2 L685.5 261 L685.1 254.5 L684.8 250Z" fill="#361918"/><path d="M683.5 250 L683.8 254.5 L684.2 261 L684.7 268.2 L685.4 275 L686 280.9 L686.7 286.6 L687.7 292.6 L689.2 299.6 L691.5 308 L694.3 317.3 L697.4 327 L700.7 336.3 L704.3 345.5 L708.3 354.7 L712.2 363.4 L715.8 371.2 L719 377.8 L721.9 383.4 L724.7 388.5 L727.7 393.6 L730.9 398.8 L734.2 403.8 L737.5 408.6 L740.8 413.2 L744.1 417.4 L747.2 421.3 L750.6 425.1 L754.4 429.1 L759.3 433.6 L765 438.4 L770.3 442.8 L773.9 445.8 L776.9 439.2 L773.4 436.5 L768.3 432.7 L762.9 428.4 L758.2 424.4 L754.6 421 L751.4 417.7 L748.4 414.2 L745.3 410.4 L742 406.1 L738.6 401.5 L735.2 396.6 L732 391.5 L729.1 386.3 L726.3 380.9 L723.4 375.1 L720.3 368.4 L716.6 360.5 L712.6 351.8 L708.6 342.6 L705 333.7 L701.8 324.7 L698.9 315.6 L696.3 306.8 L694.2 298.9 L692.8 292.2 L691.9 286.4 L691.2 280.8 L690.6 275 L690 268.2 L689.6 261 L689.2 254.5 L688.9 250Z" fill="#4a2321"/><path d="M687.6 250 L687.9 254.5 L688.2 261 L688.7 268.2 L689.4 275 L690 280.8 L690.6 286.4 L691.5 292.3 L693 299.1 L695.1 307.1 L697.8 316 L700.8 325.3 L704 334.3 L707.6 343.3 L711.5 352.5 L715.5 361.2 L719.2 369.1 L722.4 375.7 L725.2 381.5 L728 386.8 L731 392 L734.2 397.2 L737.5 402.1 L740.9 406.7 L744.2 411.1 L747.4 415 L750.4 418.6 L753.6 422 L757.3 425.6 L762 429.7 L767.5 434.1 L772.6 438 L776.1 440.8 L779.1 434.2 L775.7 431.8 L770.9 428.4 L765.6 424.5 L761.1 420.9 L757.6 417.9 L754.6 414.9 L751.7 411.8 L748.7 408.3 L745.3 404.2 L741.9 399.8 L738.5 395 L735.3 389.9 L732.3 384.6 L729.6 379.1 L726.8 373.1 L723.7 366.3 L720 358.4 L715.9 349.6 L711.8 340.5 L708.3 331.7 L705.2 323 L702.4 314.4 L700 306 L698 298.4 L696.7 291.9 L695.8 286.2 L695.2 280.7 L694.6 275 L694.1 268.3 L693.6 261 L693.3 254.5 L693 250Z" fill="#5a2b28"/><path d="M691.7 250 L692 254.5 L692.3 261 L692.8 268.3 L693.4 275 L693.9 280.8 L694.5 286.2 L695.4 292 L696.8 298.6 L698.8 306.3 L701.3 314.8 L704.1 323.6 L707.2 332.3 L710.8 341.2 L714.8 350.3 L718.9 359.1 L722.6 367 L725.7 373.7 L728.5 379.7 L731.3 385.1 L734.2 390.4 L737.5 395.5 L740.8 400.3 L744.3 404.8 L747.6 409 L750.7 412.6 L753.6 415.8 L756.6 418.9 L760.2 422.1 L764.8 425.8 L770.1 429.7 L775 433.3 L778.4 435.8 L781.4 429.2 L778.1 427.1 L773.4 424 L768.3 420.6 L764 417.4 L760.6 414.7 L757.8 412.2 L755 409.4 L752 406.2 L748.7 402.3 L745.3 398 L741.8 393.3 L738.5 388.2 L735.6 382.9 L732.9 377.2 L730.1 371.1 L727 364.2 L723.3 356.2 L719.2 347.4 L715.1 338.4 L711.5 329.7 L708.5 321.3 L705.9 313.1 L703.7 305.2 L701.9 297.9 L700.6 291.6 L699.7 286 L699.2 280.7 L698.6 275 L698.1 268.3 L697.7 261.1 L697.4 254.5 L697.2 250Z" fill="#68332f"/><path d="M695.8 250 L696.1 254.5 L696.4 261.1 L696.8 268.3 L697.4 275 L697.9 280.7 L698.5 286.1 L699.3 291.7 L700.6 298.1 L702.5 305.4 L704.8 313.5 L707.5 321.9 L710.5 330.3 L714 339 L718.1 348.1 L722.2 356.9 L726 364.8 L729.1 371.7 L731.8 377.8 L734.6 383.4 L737.5 388.8 L740.7 393.8 L744.2 398.6 L747.6 402.9 L751 406.8 L753.9 410.2 L756.7 413.1 L759.7 415.7 L763 418.6 L767.5 421.9 L772.6 425.4 L777.3 428.6 L780.6 430.8 L783.6 424.2 L780.5 422.3 L775.9 419.7 L771 416.7 L766.8 413.9 L763.7 411.6 L760.9 409.4 L758.3 407 L755.4 404 L752.1 400.4 L748.6 396.2 L745.1 391.6 L741.8 386.6 L738.9 381.2 L736.2 375.4 L733.5 369 L730.4 362 L726.7 354 L722.5 345.2 L718.3 336.2 L714.8 327.7 L711.9 319.6 L709.4 311.8 L707.4 304.3 L705.7 297.4 L704.4 291.3 L703.7 285.9 L703.1 280.6 L702.6 275 L702.2 268.3 L701.8 261.1 L701.5 254.6 L701.3 250Z" fill="#5c2c29"/><path d="M700 250 L700.2 254.5 L700.5 261.1 L700.9 268.3 L701.4 275 L701.9 280.6 L702.4 285.9 L703.2 291.4 L704.5 297.6 L706.2 304.6 L708.3 312.2 L710.8 320.2 L713.7 328.3 L717.3 336.9 L721.4 345.9 L725.6 354.7 L729.3 362.7 L732.4 369.7 L735.2 376 L737.8 381.7 L740.7 387.1 L744 392.2 L747.5 396.8 L751 401 L754.3 404.7 L757.2 407.8 L759.9 410.3 L762.7 412.6 L765.9 415.1 L770.2 418 L775.1 421.1 L779.7 423.9 L782.9 425.8 L785.9 419.2 L782.8 417.6 L778.5 415.4 L773.8 412.8 L769.7 410.4 L766.7 408.5 L764.1 406.7 L761.6 404.6 L758.8 401.9 L755.5 398.5 L751.9 394.5 L748.4 390 L745 385 L742.1 379.5 L739.5 373.5 L736.9 367 L733.8 359.9 L730 351.9 L725.7 343 L721.6 334.1 L718 325.7 L715.2 317.9 L712.9 310.5 L711 303.5 L709.5 296.9 L708.3 291 L707.6 285.7 L707.1 280.5 L706.6 275 L706.2 268.4 L705.8 261.1 L705.6 254.6 L705.4 250Z" fill="#4c2321"/><path d="M704.1 250 L704.3 254.6 L704.5 261.1 L704.9 268.4 L705.4 275 L705.8 280.6 L706.3 285.8 L707.1 291.1 L708.3 297.1 L709.9 303.8 L711.8 310.9 L714.2 318.5 L717 326.3 L720.5 334.8 L724.7 343.7 L728.9 352.6 L732.7 360.6 L735.8 367.7 L738.5 374.1 L741.1 380.1 L744 385.5 L747.3 390.5 L750.9 395 L754.4 399.1 L757.7 402.6 L760.5 405.4 L763.1 407.6 L765.7 409.5 L768.8 411.6 L772.9 414.1 L777.7 416.7 L782.1 419.1 L785.1 420.8 L788.1 414.2 L785.2 412.9 L781 411 L776.5 408.9 L772.6 406.9 L769.7 405.4 L767.3 403.9 L764.9 402.2 L762.2 399.8 L758.9 396.5 L755.3 392.7 L751.6 388.3 L748.3 383.4 L745.4 377.8 L742.8 371.7 L740.2 365 L737.2 357.8 L733.3 349.7 L729 340.8 L724.8 331.9 L721.3 323.7 L718.6 316.2 L716.5 309.3 L714.7 302.7 L713.3 296.4 L712.2 290.7 L711.5 285.6 L711.1 280.5 L710.6 275 L710.2 268.4 L709.9 261.2 L709.7 254.6 L709.5 250Z" fill="#3a1b1a"/><path d="M708.2 250 L708.4 254.6 L708.6 261.2 L708.9 268.4 L709.4 275 L709.8 280.5 L710.3 285.6 L711 290.8 L712.1 296.6 L713.6 302.9 L715.3 309.7 L717.5 316.8 L720.2 324.3 L723.8 332.6 L728 341.5 L732.3 350.4 L736.1 358.5 L739.1 365.6 L741.8 372.3 L744.4 378.4 L747.2 383.9 L750.6 388.9 L754.2 393.3 L757.8 397.2 L761.1 400.5 L763.8 403 L766.3 404.8 L768.7 406.4 L771.7 408.1 L775.6 410.2 L780.2 412.4 L784.4 414.4 L787.4 415.8 L790.4 409.2 L787.6 408.2 L783.5 406.7 L779.2 405 L775.5 403.4 L772.7 402.2 L770.4 401.2 L768.2 399.8 L765.5 397.7 L762.3 394.6 L758.6 391 L754.9 386.7 L751.5 381.7 L748.7 376.1 L746.2 369.8 L743.6 363 L740.5 355.7 L736.7 347.5 L732.3 338.6 L728 329.8 L724.5 321.7 L721.9 314.5 L720 308 L718.4 301.8 L717.1 295.9 L716.1 290.4 L715.5 285.4 L715 280.4 L714.6 275 L714.3 268.5 L714 261.2 L713.8 254.6 L713.7 250Z" fill="#291413"/></g><g filter="url(#bl2)"><path d="M708.4 292.5 L702.1 294.9 L695.7 292.7 L699 287.9 L705.8 286.7Z" fill="#6a3a90" opacity="0.7"/><path d="M712.6 339.4 L705.8 338 L702.8 333.1 L709.3 331.1 L715.5 333.7Z" fill="#6a3a90" opacity="0.7"/><path d="M718.9 348.3 L716.4 342.5 L720.5 337.2 L726.9 340.8 L727.5 347Z" fill="#6a3a90" opacity="0.7"/><path d="M738.5 369.9 L731.6 370.8 L726.3 367.1 L731.3 363.3 L738.3 363.8Z" fill="#6a3a90" opacity="0.7"/><path d="M743.1 397.1 L737.6 393.8 L737.2 388.4 L744.2 388.5 L748.6 392.7Z" fill="#6a3a90" opacity="0.7"/><path d="M764.2 419.3 L756.7 422.9 L748.4 420.7 L751.8 414.4 L760.1 412.3Z" fill="#6a3a90" opacity="0.7"/></g></g><ellipse cx="724" cy="406" rx="17" ry="22" transform="rotate(-18 724 406)" fill="url(#dsg)"/><ellipse cx="724" cy="406" rx="17" ry="22" transform="rotate(-18 724 406)" fill="#000" filter="url(#marbD)" opacity=".55"/><path d="M751 381 Q760 376 768 378 V394 Q760 392 754 386 Z" fill="#7a3438"/><clipPath id="cptt"><path d="M663 417.9 L667.5 418.7 L674.1 419.8 L681.4 421.2 L688.6 422.8 L695.7 424.7 L703.3 427 L710.9 429.4 L718.1 431.7 L724.6 433.9 L730.6 436.1 L736.6 438.3 L742.9 440.6 L750.2 443.3 L758 446.2 L765 448.8 L769.9 450.6 L774.1 439.4 L769.2 437.6 L762.2 434.9 L754.3 432 L747.1 429.4 L740.8 427.1 L734.7 424.8 L728.5 422.6 L721.9 420.3 L714.6 417.9 L706.8 415.5 L699 413.2 L691.4 411.2 L683.8 409.5 L676.2 408 L669.6 406.9 L665 406.1Z"/></clipPath><path d="M663 417.9 L667.5 418.7 L674.1 419.8 L681.4 421.2 L688.6 422.8 L695.7 424.7 L703.3 427 L710.9 429.4 L718.1 431.7 L724.6 433.9 L730.6 436.1 L736.6 438.3 L742.9 440.6 L750.2 443.3 L758 446.2 L765 448.8 L769.9 450.6 L774.1 439.4 L769.2 437.6 L762.2 434.9 L754.3 432 L747.1 429.4 L740.8 427.1 L734.7 424.8 L728.5 422.6 L721.9 420.3 L714.6 417.9 L706.8 415.5 L699 413.2 L691.4 411.2 L683.8 409.5 L676.2 408 L669.6 406.9 L665 406.1Z" fill="#753b3b"/><g clip-path="url(#cptt)"><g filter="url(#bl)"><path d="M662.9 418.1 L667.5 419 L674 420.1 L681.4 421.5 L688.5 423.1 L695.6 425 L703.2 427.2 L710.9 429.6 L718 431.9 L724.5 434.1 L730.5 436.3 L736.6 438.5 L742.8 440.9 L750.1 443.5 L757.9 446.4 L764.9 449 L769.8 450.8 L770.7 448.5 L765.8 446.7 L758.8 444.1 L750.9 441.2 L743.7 438.5 L737.4 436.2 L731.4 434 L725.3 431.8 L718.8 429.6 L711.6 427.2 L704 424.8 L696.3 422.6 L689.1 420.7 L681.9 419 L674.5 417.6 L667.9 416.5 L663.3 415.7Z" fill="#502828"/><path d="M663.3 416.2 L667.9 417 L674.4 418.1 L681.8 419.5 L689 421.1 L696.2 423 L703.8 425.3 L711.5 427.7 L718.7 430 L725.2 432.2 L731.2 434.4 L737.3 436.7 L743.5 439 L750.8 441.6 L758.6 444.5 L765.6 447.2 L770.5 449 L771.4 446.6 L766.5 444.8 L759.5 442.2 L751.6 439.3 L744.4 436.7 L738.1 434.3 L732.1 432.1 L726 429.9 L719.4 427.7 L712.2 425.3 L704.6 422.9 L696.9 420.7 L689.6 418.7 L682.3 417.1 L674.8 415.7 L668.3 414.5 L663.7 413.7Z" fill="#7d4141"/><path d="M663.6 414.2 L668.2 415 L674.7 416.1 L682.2 417.5 L689.5 419.2 L696.7 421.1 L704.4 423.4 L712.1 425.8 L719.3 428.1 L725.8 430.3 L731.9 432.5 L737.9 434.8 L744.2 437.1 L751.5 439.8 L759.3 442.7 L766.3 445.3 L771.2 447.1 L772.1 444.8 L767.2 443 L760.1 440.3 L752.3 437.4 L745.1 434.8 L738.8 432.5 L732.8 430.2 L726.6 428 L720.1 425.8 L712.8 423.4 L705.1 421 L697.4 418.7 L690.1 416.8 L682.7 415.1 L675.2 413.7 L668.6 412.6 L664 411.8Z" fill="#7e4040"/><path d="M664 412.2 L668.5 413 L675.1 414.2 L682.6 415.6 L689.9 417.2 L697.3 419.2 L705 421.5 L712.7 423.9 L719.9 426.2 L726.5 428.5 L732.6 430.7 L738.6 432.9 L744.9 435.2 L752.2 437.9 L760 440.8 L767 443.4 L771.9 445.2 L772.8 442.9 L767.9 441.1 L760.8 438.5 L753 435.6 L745.8 432.9 L739.5 430.6 L733.5 428.3 L727.3 426.1 L720.7 423.9 L713.4 421.5 L705.7 419.1 L697.9 416.8 L690.5 414.8 L683.1 413.2 L675.5 411.7 L669 410.6 L664.4 409.8Z" fill="#6c3535"/><path d="M664.3 410.3 L668.9 411.1 L675.4 412.2 L683 413.6 L690.4 415.3 L697.8 417.3 L705.6 419.6 L713.3 422 L720.6 424.3 L727.1 426.6 L733.3 428.8 L739.3 431 L745.6 433.3 L752.9 436 L760.7 438.9 L767.7 441.5 L772.6 443.4 L773.5 441 L768.6 439.2 L761.5 436.6 L753.7 433.7 L746.5 431 L740.2 428.7 L734.1 426.5 L728 424.2 L721.3 422 L714 419.6 L706.3 417.2 L698.5 414.9 L691 412.9 L683.5 411.2 L675.9 409.8 L669.3 408.6 L664.7 407.8Z" fill="#522727"/><path d="M664.7 408.3 L669.2 409.1 L675.8 410.2 L683.4 411.7 L690.9 413.3 L698.4 415.4 L706.2 417.7 L713.9 420.1 L721.2 422.4 L727.8 424.7 L734 426.9 L740 429.2 L746.3 431.5 L753.5 434.1 L761.4 437 L768.4 439.7 L773.3 441.5 L774.2 439.2 L769.3 437.3 L762.2 434.7 L754.4 431.8 L747.2 429.1 L740.9 426.8 L734.8 424.6 L728.6 422.3 L722 420.1 L714.6 417.7 L706.9 415.3 L699 413 L691.5 410.9 L683.9 409.2 L676.2 407.8 L669.6 406.7 L665.1 405.9Z" fill="#371919"/></g><g filter="url(#bl2)"><path d="M687 416 L683.2 418.8 L678 418.3 L679 414.3 L683.5 412.3Z" fill="#8044a8" opacity="0.7"/><path d="M697.7 422.3 L692.6 421.3 L690.3 417.6 L695.2 416.1 L699.8 418Z" fill="#8044a8" opacity="0.7"/><path d="M709.9 427.6 L708.3 423.7 L711 420.2 L715.3 422.6 L715.7 426.6Z" fill="#8044a8" opacity="0.7"/><path d="M749.9 436.5 L743.1 437.8 L737.4 434.7 L741.9 430.5 L748.9 430.4Z" fill="#8044a8" opacity="0.7"/><path d="M760.4 444.9 L754.1 442.5 L752.4 437.2 L759.3 436.2 L764.7 439.7Z" fill="#8044a8" opacity="0.7"/></g></g><clipPath id="cpt1"><path d="M446.2 239.2 L449.4 244.6 L453.9 252.7 L459.3 262 L465 271.4 L471 280.6 L477.4 289.7 L483.6 298.6 L489.3 306.9 L494.3 314.8 L499.1 323 L504.3 331.5 L509.9 339.8 L515.9 347.7 L522.2 355.2 L528.6 362.2 L535.1 368.4 L541.4 373.5 L547.7 377.6 L554.1 381 L560.6 383.8 L567.4 385.6 L574.4 386.5 L581.6 386.4 L588.8 385 L595.6 382.3 L602 378.6 L607.8 374.2 L613.1 369 L617.8 362.9 L621.5 356.6 L624.7 350.4 L627.9 344.4 L631.5 337.7 L635.3 330.5 L639.2 322.9 L642.8 315.3 L646.1 307.8 L649 300.3 L651.8 293 L654.6 285.8 L657.7 277.9 L660.8 269.5 L663.7 262 L665.6 256.8 L640.4 247.2 L638.4 252.5 L635.6 259.9 L632.4 268.3 L629.4 276.2 L626.6 283.4 L623.9 290.5 L621.1 297.4 L618.2 304.1 L614.9 311 L611.4 318.1 L607.7 325 L604.1 331.6 L600.8 337.9 L597.9 343.5 L595.4 347.8 L592.9 351 L590 353.8 L586.9 356.2 L583.9 358 L581.2 359 L578.7 359.5 L575.9 359.6 L572.7 359.2 L569.4 358.2 L566 356.8 L562.5 354.6 L558.9 351.6 L554.9 347.6 L550.5 342.5 L545.7 336.3 L540.7 329.3 L536.1 322.2 L532 315 L528 307.1 L523.6 298.4 L518.7 289.1 L513.1 279.6 L507.4 270.2 L501.8 261 L497 252.6 L492.6 243.9 L488.2 234.8 L484.4 226.7 L481.8 220.8Z"/></clipPath><path d="M446.2 239.2 L449.4 244.6 L453.9 252.7 L459.3 262 L465 271.4 L471 280.6 L477.4 289.7 L483.6 298.6 L489.3 306.9 L494.3 314.8 L499.1 323 L504.3 331.5 L509.9 339.8 L515.9 347.7 L522.2 355.2 L528.6 362.2 L535.1 368.4 L541.4 373.5 L547.7 377.6 L554.1 381 L560.6 383.8 L567.4 385.6 L574.4 386.5 L581.6 386.4 L588.8 385 L595.6 382.3 L602 378.6 L607.8 374.2 L613.1 369 L617.8 362.9 L621.5 356.6 L624.7 350.4 L627.9 344.4 L631.5 337.7 L635.3 330.5 L639.2 322.9 L642.8 315.3 L646.1 307.8 L649 300.3 L651.8 293 L654.6 285.8 L657.7 277.9 L660.8 269.5 L663.7 262 L665.6 256.8 L640.4 247.2 L638.4 252.5 L635.6 259.9 L632.4 268.3 L629.4 276.2 L626.6 283.4 L623.9 290.5 L621.1 297.4 L618.2 304.1 L614.9 311 L611.4 318.1 L607.7 325 L604.1 331.6 L600.8 337.9 L597.9 343.5 L595.4 347.8 L592.9 351 L590 353.8 L586.9 356.2 L583.9 358 L581.2 359 L578.7 359.5 L575.9 359.6 L572.7 359.2 L569.4 358.2 L566 356.8 L562.5 354.6 L558.9 351.6 L554.9 347.6 L550.5 342.5 L545.7 336.3 L540.7 329.3 L536.1 322.2 L532 315 L528 307.1 L523.6 298.4 L518.7 289.1 L513.1 279.6 L507.4 270.2 L501.8 261 L497 252.6 L492.6 243.9 L488.2 234.8 L484.4 226.7 L481.8 220.8Z" fill="#ee887c"/><g clip-path="url(#cpt1)"><g filter="url(#bl)"><path d="M445.5 239.5 L448.7 245 L453.3 253 L458.6 262.4 L464.3 271.8 L470.4 280.9 L476.8 290.1 L483.1 299 L488.7 307.2 L493.7 315.2 L498.5 323.3 L503.7 331.8 L509.4 340.1 L515.4 348.1 L521.8 355.6 L528.2 362.6 L534.7 368.8 L541 373.9 L547.4 378.1 L553.8 381.5 L560.4 384.3 L567.2 386.2 L574.4 387.1 L581.6 386.9 L588.9 385.5 L595.9 382.8 L602.3 379.1 L608.1 374.6 L613.5 369.3 L618.2 363.2 L622 356.8 L625.2 350.7 L628.4 344.6 L632 338 L635.8 330.7 L639.7 323.1 L643.3 315.5 L646.6 308 L649.5 300.5 L652.3 293.2 L655.1 286 L658.2 278.1 L661.4 269.7 L664.2 262.2 L666.1 256.9 L662.6 255.6 L660.6 260.8 L657.8 268.3 L654.6 276.7 L651.6 284.7 L648.8 291.9 L646 299.1 L643.1 306.5 L639.8 313.9 L636.3 321.5 L632.5 329 L628.6 336.2 L625.1 342.8 L621.9 348.9 L618.7 355 L615.1 361.1 L610.7 366.8 L605.6 371.8 L600.2 376 L594.2 379.4 L587.9 381.9 L581.2 383.1 L574.6 383.3 L568 382.5 L561.6 380.7 L555.5 378.1 L549.5 374.8 L543.5 370.8 L537.4 365.9 L531.3 359.9 L525 353 L518.9 345.5 L513 337.7 L507.6 329.5 L502.6 321.1 L497.8 312.9 L492.8 304.8 L487.2 296.3 L481 287.4 L474.7 278.2 L468.8 269.2 L463.3 259.9 L458.1 250.5 L453.6 242.5 L450.5 237Z" fill="#9f4750"/><path d="M449.1 237.7 L452.2 243.2 L456.7 251.2 L462 260.6 L467.5 269.9 L473.5 279 L479.8 288.2 L486 297.1 L491.6 305.5 L496.6 313.5 L501.4 321.7 L506.5 330.1 L512 338.4 L517.9 346.2 L524.1 353.7 L530.4 360.7 L536.6 366.7 L542.8 371.7 L548.9 375.8 L555 379.1 L561.3 381.7 L567.8 383.5 L574.5 384.4 L581.4 384.2 L588.2 382.9 L594.7 380.4 L600.8 376.9 L606.3 372.6 L611.5 367.5 L616 361.7 L619.6 355.5 L622.8 349.4 L626 343.3 L629.6 336.7 L633.4 329.5 L637.2 322 L640.8 314.4 L644.1 306.9 L647 299.5 L649.8 292.3 L652.6 285.1 L655.6 277.1 L658.8 268.7 L661.6 261.2 L663.6 256 L660.1 254.7 L658.1 259.9 L655.3 267.4 L652.1 275.8 L649.1 283.7 L646.3 290.9 L643.5 298.2 L640.6 305.5 L637.4 312.8 L633.8 320.3 L630.1 327.7 L626.3 334.9 L622.7 341.6 L619.5 347.7 L616.3 353.7 L612.8 359.6 L608.7 365 L603.9 369.7 L598.7 373.7 L593 377 L587.1 379.3 L580.9 380.5 L574.7 380.6 L568.5 379.8 L562.5 378.1 L556.7 375.7 L551 372.6 L545.2 368.6 L539.4 363.8 L533.5 357.9 L527.4 351.1 L521.4 343.6 L515.7 335.9 L510.4 327.8 L505.5 319.5 L500.7 311.2 L495.8 303 L490.1 294.4 L484 285.4 L477.8 276.3 L472 267.3 L466.6 258 L461.5 248.7 L457.1 240.7 L454 235.1Z" fill="#c85c60"/><path d="M452.6 235.9 L455.7 241.4 L460.1 249.5 L465.3 258.8 L470.7 268 L476.6 277 L482.8 286.2 L489 295.2 L494.6 303.7 L499.6 311.9 L504.3 320.2 L509.2 328.5 L514.6 336.6 L520.4 344.4 L526.4 351.8 L532.6 358.7 L538.6 364.6 L544.5 369.5 L550.4 373.5 L556.2 376.7 L562.2 379.2 L568.3 380.9 L574.7 381.7 L581.1 381.5 L587.4 380.3 L593.5 377.9 L599.3 374.6 L604.6 370.5 L609.5 365.7 L613.7 360.2 L617.3 354.2 L620.4 348.2 L623.6 342.1 L627.2 335.5 L631 328.2 L634.8 320.8 L638.4 313.3 L641.6 305.9 L644.5 298.5 L647.3 291.3 L650.1 284.1 L653.1 276.2 L656.3 267.8 L659.1 260.3 L661.1 255 L657.5 253.7 L655.6 258.9 L652.8 266.4 L649.6 274.8 L646.5 282.7 L643.8 289.9 L641 297.2 L638.1 304.4 L634.9 311.7 L631.4 319.1 L627.7 326.5 L623.9 333.7 L620.3 340.3 L617.1 346.4 L614 352.4 L610.6 358.1 L606.6 363.2 L602.1 367.7 L597.1 371.5 L591.9 374.5 L586.4 376.7 L580.7 377.8 L574.9 377.9 L569.1 377.2 L563.4 375.6 L557.9 373.3 L552.5 370.3 L547 366.5 L541.4 361.7 L535.6 355.9 L529.7 349.2 L523.9 341.8 L518.3 334.2 L513.1 326.2 L508.4 317.9 L503.7 309.6 L498.7 301.2 L493.1 292.5 L487 283.5 L480.9 274.3 L475.2 265.4 L469.9 256.2 L464.9 247 L460.6 238.9 L457.6 233.3Z" fill="#d56968"/><path d="M456.2 234 L459.2 239.6 L463.5 247.7 L468.6 257 L474 266.2 L479.6 275.1 L485.8 284.2 L491.9 293.3 L497.5 301.9 L502.5 310.2 L507.2 318.6 L512 326.9 L517.2 334.9 L522.9 342.5 L528.8 349.9 L534.8 356.7 L540.6 362.6 L546.3 367.3 L551.9 371.2 L557.4 374.2 L563 376.6 L568.9 378.2 L574.8 379 L580.8 378.9 L586.7 377.7 L592.3 375.5 L597.7 372.4 L602.8 368.5 L607.4 363.9 L611.5 358.7 L614.9 352.9 L618 346.9 L621.2 340.8 L624.8 334.2 L628.6 327 L632.4 319.6 L635.9 312.2 L639.1 304.8 L642 297.6 L644.8 290.3 L647.5 283.1 L650.6 275.2 L653.8 266.8 L656.6 259.3 L658.6 254.1 L655 252.8 L653.1 258 L650.2 265.5 L647.1 273.9 L644 281.8 L641.2 289 L638.5 296.2 L635.6 303.4 L632.5 310.6 L629 317.9 L625.3 325.3 L621.5 332.4 L617.9 339 L614.7 345.2 L611.6 351.1 L608.4 356.6 L604.6 361.4 L600.3 365.6 L595.6 369.2 L590.7 372.1 L585.6 374.1 L580.4 375.1 L575 375.2 L569.6 374.5 L564.3 373 L559.1 370.9 L553.9 368 L548.7 364.3 L543.4 359.7 L537.8 354 L532.1 347.3 L526.4 340 L520.9 332.4 L515.9 324.6 L511.3 316.3 L506.6 307.9 L501.6 299.4 L496 290.6 L490 281.5 L484 272.4 L478.4 263.5 L473.3 254.4 L468.3 245.2 L464.1 237.1 L461.2 231.5Z" fill="#e27670"/><path d="M459.7 232.2 L462.7 237.8 L467 245.9 L471.9 255.1 L477.2 264.3 L482.7 273.1 L488.8 282.3 L494.9 291.4 L500.5 300.1 L505.4 308.6 L510.1 317 L514.8 325.2 L519.9 333.1 L525.4 340.7 L531.1 348 L536.9 354.7 L542.6 360.5 L548 365.1 L553.3 368.9 L558.6 371.8 L563.9 374.1 L569.4 375.6 L574.9 376.3 L580.5 376.2 L585.9 375.1 L591.2 373.1 L596.2 370.1 L601 366.5 L605.4 362.1 L609.3 357.2 L612.6 351.6 L615.6 345.7 L618.9 339.5 L622.4 332.9 L626.2 325.8 L630 318.4 L633.4 311 L636.6 303.8 L639.5 296.6 L642.3 289.4 L645 282.2 L648.1 274.2 L651.2 265.9 L654.1 258.4 L656 253.1 L652.5 251.8 L650.5 257 L647.7 264.5 L644.5 272.9 L641.5 280.8 L638.7 288 L636 295.2 L633.1 302.4 L630 309.5 L626.6 316.7 L622.9 324 L619.1 331.1 L615.5 337.7 L612.3 343.9 L609.2 349.8 L606.1 355 L602.6 359.6 L598.5 363.6 L594.1 367 L589.5 369.7 L584.8 371.5 L580.1 372.4 L575.2 372.5 L570.2 371.9 L565.2 370.5 L560.3 368.4 L555.4 365.7 L550.5 362.1 L545.4 357.6 L540 352 L534.4 345.4 L528.8 338.1 L523.5 330.6 L518.7 322.9 L514.1 314.7 L509.5 306.3 L504.6 297.6 L499 288.7 L493 279.5 L487 270.4 L481.6 261.6 L476.6 252.6 L471.7 243.4 L467.6 235.3 L464.7 229.6Z" fill="#eb8278"/><path d="M463.3 230.4 L466.2 236 L470.4 244.1 L475.3 253.3 L480.4 262.4 L485.8 271.2 L491.8 280.3 L497.8 289.5 L503.4 298.4 L508.4 306.9 L513 315.4 L517.6 323.6 L522.5 331.4 L527.8 338.9 L533.5 346.1 L539.1 352.8 L544.6 358.4 L549.8 363 L554.8 366.6 L559.8 369.4 L564.8 371.5 L569.9 372.9 L575.1 373.6 L580.2 373.5 L585.2 372.5 L590 370.6 L594.7 367.9 L599.3 364.4 L603.4 360.4 L607 355.7 L610.2 350.3 L613.2 344.4 L616.5 338.3 L620.1 331.6 L623.8 324.5 L627.5 317.2 L631 309.9 L634.1 302.8 L637 295.6 L639.7 288.4 L642.5 281.2 L645.5 273.3 L648.7 264.9 L651.5 257.4 L653.5 252.2 L650 250.9 L648 256.1 L645.2 263.6 L642 271.9 L639 279.8 L636.2 287 L633.5 294.2 L630.6 301.3 L627.6 308.4 L624.1 315.5 L620.5 322.8 L616.7 329.8 L613.1 336.5 L609.9 342.7 L606.9 348.4 L603.9 353.5 L600.6 357.9 L596.8 361.6 L592.6 364.7 L588.3 367.2 L584.1 368.9 L579.8 369.7 L575.3 369.8 L570.7 369.2 L566.1 367.9 L561.5 366 L556.9 363.4 L552.2 359.9 L547.4 355.5 L542.2 350 L536.7 343.5 L531.3 336.3 L526.1 328.9 L521.5 321.3 L517 313.2 L512.5 304.6 L507.5 295.9 L501.9 286.8 L496 277.6 L490.1 268.4 L484.8 259.7 L479.9 250.8 L475.2 241.6 L471.1 233.5 L468.3 227.8Z" fill="#f18e80"/><path d="M466.8 228.5 L469.7 234.2 L473.8 242.3 L478.6 251.5 L483.6 260.5 L488.9 269.2 L494.8 278.4 L500.8 287.6 L506.4 296.6 L511.3 305.3 L515.9 313.8 L520.4 321.9 L525.1 329.6 L530.3 337 L535.8 344.2 L541.3 350.8 L546.6 356.3 L551.5 360.8 L556.3 364.3 L561 367 L565.7 369 L570.5 370.3 L575.2 370.9 L579.9 370.8 L584.4 369.9 L588.8 368.2 L593.2 365.6 L597.5 362.4 L601.4 358.6 L604.8 354.1 L607.8 349 L610.8 343.2 L614.1 337 L617.7 330.4 L621.4 323.3 L625.1 316 L628.5 308.8 L631.6 301.7 L634.5 294.6 L637.2 287.4 L640 280.2 L643 272.3 L646.2 263.9 L649 256.5 L651 251.2 L647.4 249.9 L645.5 255.1 L642.7 262.6 L639.5 271 L636.5 278.9 L633.7 286.1 L630.9 293.2 L628.1 300.3 L625.1 307.2 L621.7 314.3 L618.1 321.5 L614.4 328.6 L610.8 335.2 L607.5 341.4 L604.5 347.1 L601.6 352 L598.6 356.1 L595 359.5 L591.1 362.5 L587.2 364.8 L583.3 366.3 L579.5 367 L575.4 367.1 L571.2 366.6 L567 365.4 L562.7 363.6 L558.4 361.1 L554 357.7 L549.4 353.4 L544.4 348 L539.1 341.6 L533.8 334.5 L528.8 327.1 L524.2 319.6 L519.9 311.6 L515.4 303 L510.5 294.1 L504.9 284.9 L499 275.6 L493.2 266.5 L488 257.8 L483.3 249 L478.6 239.8 L474.6 231.7 L471.8 226Z" fill="#ed897d"/><path d="M470.4 226.7 L473.2 232.4 L477.2 240.5 L481.9 249.7 L486.8 258.6 L492 267.3 L497.8 276.4 L503.7 285.7 L509.3 294.8 L514.2 303.6 L518.8 312.2 L523.1 320.3 L527.7 327.8 L532.8 335.2 L538.2 342.3 L543.5 348.8 L548.6 354.3 L553.3 358.6 L557.8 362 L562.2 364.6 L566.6 366.4 L571 367.6 L575.4 368.2 L579.6 368.1 L583.6 367.3 L587.6 365.8 L591.7 363.4 L595.7 360.3 L599.4 356.8 L602.5 352.6 L605.5 347.7 L608.5 341.9 L611.7 335.7 L615.3 329.1 L619 322 L622.7 314.8 L626.1 307.7 L629.1 300.7 L631.9 293.6 L634.7 286.5 L637.5 279.3 L640.5 271.4 L643.7 263 L646.5 255.5 L648.5 250.3 L644.9 249 L642.9 254.2 L640.1 261.7 L637 270 L633.9 277.9 L631.2 285.1 L628.4 292.2 L625.6 299.2 L622.6 306.1 L619.3 313.1 L615.7 320.3 L612 327.3 L608.4 333.9 L605.1 340.2 L602.2 345.8 L599.4 350.5 L596.5 354.3 L593.2 357.5 L589.6 360.3 L586 362.4 L582.6 363.7 L579.2 364.4 L575.6 364.4 L571.8 363.9 L567.8 362.8 L563.9 361.2 L559.9 358.8 L555.8 355.5 L551.4 351.4 L546.6 346.1 L541.4 339.7 L536.3 332.6 L531.4 325.4 L527 318 L522.8 310 L518.4 301.3 L513.4 292.3 L507.8 283 L502 273.7 L496.3 264.5 L491.3 256 L486.6 247.2 L482 238 L478.1 229.9 L475.4 224.1Z" fill="#df736f"/><path d="M474 224.9 L476.7 230.6 L480.6 238.8 L485.2 247.9 L490 256.7 L495 265.3 L500.8 274.5 L506.6 283.8 L512.2 293 L517.2 302 L521.6 310.6 L525.9 318.6 L530.3 326.1 L535.3 333.4 L540.5 340.4 L545.7 346.8 L550.6 352.2 L555.1 356.4 L559.3 359.7 L563.4 362.1 L567.5 363.9 L571.6 365 L575.5 365.5 L579.3 365.4 L582.9 364.7 L586.5 363.3 L590.2 361.2 L593.9 358.3 L597.3 355 L600.3 351.1 L603.1 346.4 L606.1 340.7 L609.3 334.4 L612.9 327.8 L616.6 320.8 L620.3 313.6 L623.6 306.6 L626.6 299.6 L629.4 292.6 L632.2 285.5 L634.9 278.3 L638 270.4 L641.1 262 L644 254.6 L645.9 249.3 L642.4 248 L640.4 253.2 L637.6 260.7 L634.4 269 L631.4 276.9 L628.6 284.1 L625.9 291.3 L623.1 298.2 L620.2 305 L616.9 312 L613.3 319.1 L609.6 326 L606 332.7 L602.7 338.9 L599.8 344.5 L597.2 349 L594.5 352.5 L591.5 355.4 L588.1 358 L584.8 359.9 L581.8 361.1 L578.9 361.7 L575.7 361.7 L572.3 361.3 L568.7 360.3 L565.1 358.8 L561.4 356.5 L557.5 353.3 L553.4 349.3 L548.7 344.1 L543.8 337.8 L538.7 330.8 L534 323.6 L529.8 316.3 L525.7 308.4 L521.3 299.7 L516.4 290.5 L510.8 281.1 L505 271.7 L499.4 262.6 L494.5 254.1 L489.9 245.4 L485.4 236.3 L481.6 228.1 L478.9 222.3Z" fill="#ca6062"/><path d="M477.5 223 L480.2 228.8 L484.1 237 L488.6 246.1 L493.2 254.8 L498.1 263.4 L503.8 272.5 L509.6 281.9 L515.2 291.2 L520.1 300.3 L524.5 309 L528.7 317 L533 324.3 L537.8 331.5 L542.8 338.5 L547.9 344.9 L552.6 350.1 L556.8 354.2 L560.8 357.4 L564.6 359.7 L568.4 361.3 L572.1 362.3 L575.7 362.8 L579 362.7 L582.1 362.1 L585.3 360.9 L588.7 358.9 L592.2 356.3 L595.3 353.2 L598.1 349.6 L600.7 345 L603.7 339.4 L606.9 333.2 L610.5 326.5 L614.2 319.6 L617.8 312.4 L621.2 305.5 L624.1 298.6 L626.9 291.6 L629.7 284.5 L632.4 277.3 L635.5 269.4 L638.6 261.1 L641.4 253.6 L643.4 248.4 L639.9 247.1 L637.9 252.3 L635.1 259.7 L631.9 268.1 L628.9 276 L626.1 283.2 L623.4 290.3 L620.6 297.2 L617.7 303.9 L614.4 310.8 L610.9 317.8 L607.2 324.8 L603.6 331.4 L600.3 337.7 L597.4 343.2 L594.9 347.5 L592.5 350.7 L589.7 353.4 L586.6 355.8 L583.6 357.5 L581.1 358.5 L578.6 359 L575.9 359 L572.8 358.6 L569.6 357.7 L566.3 356.3 L562.8 354.2 L559.3 351.1 L555.3 347.2 L550.9 342.1 L546.1 335.9 L541.2 328.9 L536.6 321.9 L532.6 314.7 L528.6 306.8 L524.2 298 L519.3 288.8 L513.7 279.2 L508 269.8 L502.4 260.6 L497.7 252.2 L493.2 243.5 L488.9 234.5 L485.1 226.3 L482.5 220.5Z" fill="#ae5056"/></g><g filter="url(#bl2)"><path d="M500.9 262.8 L494.5 267.5 L485.9 266.6 L487.5 259.9 L495.2 256.6Z" fill="#c24cf0" opacity="0.62"/><path d="M499.5 307.5 L491 305.8 L487.2 299.6 L495.4 297.1 L503.1 300.3Z" fill="#c24cf0" opacity="0.62"/><path d="M629.2 325 L619.4 327.9 L610.3 323.8 L616.1 317 L626.6 316.1Z" fill="#c24cf0" opacity="0.62"/><path d="M605.5 367.6 L602.8 361.1 L607.4 355.3 L614.4 359.3 L615.1 366.1Z" fill="#c24cf0" opacity="0.62"/><path d="M593.5 384.5 L585 382.8 L581.2 376.6 L589.4 374.1 L597.1 377.3Z" fill="#c24cf0" opacity="0.62"/><path d="M560 365.9 L552.1 368.9 L544.1 366.1 L548.3 360.1 L556.8 358.7Z" fill="#c24cf0" opacity="0.62"/><path d="M627.2 296.5 L622.1 292.8 L622.4 287.3 L629.3 288 L633.2 292.6Z" fill="#c24cf0" opacity="0.62"/><path d="M639.6 276.2 L638.6 270.1 L644 265.6 L649.4 270.1 L648.4 276.3Z" fill="#c24cf0" opacity="0.62"/><path d="M536.1 336.4 L529.1 336.6 L524.3 332.6 L529.8 329.2 L536.7 330.2Z" fill="#c24cf0" opacity="0.62"/><path d="M573 364.7 L566.5 362.8 L564.1 357.6 L570.8 356.1 L576.6 359.2Z" fill="#c24cf0" opacity="0.62"/></g></g><clipPath id="cpt2"><path d="M600 200 L594.3 206.5 L586.1 215.9 L576.9 226.4 L568.4 236.4 L560.7 245.9 L553.1 255.6 L545.7 265.1 L538.7 273.8 L532.1 281.8 L525.8 289.4 L520 296.2 L514.6 302.3 L509.7 307.4 L505.3 311.7 L501.4 315.3 L498 318.5 L495.7 320.8 L494.2 322.4 L492.6 324 L490 326.5 L485.4 330.8 L479.5 336.2 L473.9 341.4 L470 345 L474 402 L476.8 398.8 L480.9 394.2 L485.5 388.9 L490 383.6 L494.2 378.7 L498.4 373.8 L502.9 368.3 L508 361.7 L514.1 353.3 L520.8 343.7 L527.8 333.7 L534.4 324.3 L540.4 315.8 L546.2 307.7 L552.1 299.6 L558.5 291.3 L565.6 282.7 L573.1 274.1 L581 265.2 L588.9 256.2 L597.8 246 L607.3 234.9 L616 224.9 L622 218Z"/></clipPath><path d="M600 200 L594.3 206.5 L586.1 215.9 L576.9 226.4 L568.4 236.4 L560.7 245.9 L553.1 255.6 L545.7 265.1 L538.7 273.8 L532.1 281.8 L525.8 289.4 L520 296.2 L514.6 302.3 L509.7 307.4 L505.3 311.7 L501.4 315.3 L498 318.5 L495.7 320.8 L494.2 322.4 L492.6 324 L490 326.5 L485.4 330.8 L479.5 336.2 L473.9 341.4 L470 345 L474 402 L476.8 398.8 L480.9 394.2 L485.5 388.9 L490 383.6 L494.2 378.7 L498.4 373.8 L502.9 368.3 L508 361.7 L514.1 353.3 L520.8 343.7 L527.8 333.7 L534.4 324.3 L540.4 315.8 L546.2 307.7 L552.1 299.6 L558.5 291.3 L565.6 282.7 L573.1 274.1 L581 265.2 L588.9 256.2 L597.8 246 L607.3 234.9 L616 224.9 L622 218Z" fill="#ea7672"/><g clip-path="url(#cpt2)"><g filter="url(#bl)"><path d="M599.6 199.6 L593.8 206.1 L585.6 215.5 L576.5 226 L568 236 L560.3 245.5 L552.7 255.2 L545.3 264.7 L538.3 273.4 L531.7 281.5 L525.4 289 L519.6 295.9 L514.2 301.9 L509.4 306.9 L505 311 L501.1 314.6 L497.8 317.6 L495.5 319.9 L494.1 321.3 L492.6 322.9 L490 325.4 L485.4 329.7 L479.5 335.1 L473.8 340.3 L469.9 343.9 L470.5 351.8 L474.2 348.3 L479.7 343.2 L485.4 337.8 L490 333.4 L492.8 330.5 L494.7 328.5 L496.5 326.5 L499.2 323.7 L502.9 319.9 L507.2 315.5 L511.9 310.6 L517 304.9 L522.4 298.6 L528.3 291.6 L534.5 284 L541.1 275.9 L548.1 267.2 L555.5 257.8 L563.1 248.2 L570.9 238.8 L579.4 228.7 L588.6 218.1 L596.9 208.7 L602.6 202.2Z" fill="#e07a71"/><path d="M601.8 201.4 L596 208 L587.8 217.4 L578.6 227.9 L570 238 L562.3 247.4 L554.7 257.1 L547.3 266.5 L540.3 275.2 L533.7 283.3 L527.5 290.8 L521.6 297.8 L516.2 304.1 L511.2 309.5 L506.5 314.2 L502.4 318.4 L498.8 322 L496.3 324.6 L494.5 326.5 L492.8 328.3 L490 331.1 L485.4 335.5 L479.6 340.9 L474.1 346 L470.3 349.6 L470.9 357.5 L474.5 354 L479.8 349 L485.4 343.6 L490 339.1 L493 336 L495.1 333.7 L497.3 331.3 L500.2 328 L504.2 323.7 L508.7 318.7 L513.7 313.2 L519 307.1 L524.5 300.5 L530.3 293.4 L536.5 285.7 L543.1 277.7 L550.1 268.9 L557.5 259.7 L565.2 250.1 L572.9 240.8 L581.5 230.7 L590.7 220.1 L599.1 210.6 L604.8 204Z" fill="#f49585"/><path d="M604 203.2 L598.2 209.8 L589.9 219.3 L580.7 229.9 L572.1 240 L564.4 249.4 L556.7 258.9 L549.3 268.2 L542.3 276.9 L535.7 285 L529.5 292.7 L523.7 299.8 L518.2 306.3 L513 312.1 L508.1 317.4 L503.7 322.2 L499.8 326.3 L497 329.4 L495 331.6 L492.9 333.8 L490 336.8 L485.4 341.3 L479.7 346.7 L474.4 351.8 L470.7 355.3 L471.3 363.2 L474.8 359.8 L479.9 354.8 L485.4 349.4 L490 344.8 L493.1 341.5 L495.5 338.8 L498 336 L501.2 332.3 L505.4 327.5 L510.3 321.9 L515.5 315.8 L520.9 309.3 L526.5 302.5 L532.3 295.2 L538.5 287.5 L545 279.4 L552.1 270.7 L559.5 261.5 L567.2 252.1 L575 242.7 L583.6 232.6 L592.9 222 L601.2 212.4 L607 205.8Z" fill="#fba795"/><path d="M606.2 205 L600.4 211.7 L592 221.2 L582.7 231.9 L574.1 241.9 L566.4 251.3 L558.7 260.8 L551.3 270 L544.2 278.7 L537.7 286.8 L531.5 294.5 L525.7 301.7 L520.1 308.5 L514.8 314.8 L509.6 320.6 L504.9 326 L500.8 330.6 L497.7 334.1 L495.4 336.8 L493.1 339.3 L490 342.5 L485.4 347.1 L479.9 352.5 L474.7 357.5 L471.1 361 L471.7 368.9 L475.1 365.5 L480.1 360.6 L485.4 355.2 L490 350.5 L493.3 347 L496 344 L498.7 340.8 L502.2 336.6 L506.7 331.3 L511.8 325.1 L517.3 318.5 L522.9 311.5 L528.6 304.5 L534.4 297.1 L540.5 289.3 L547 281.2 L554 272.5 L561.5 263.4 L569.2 254 L577 244.7 L585.7 234.6 L595 223.9 L603.4 214.3 L609.2 207.6Z" fill="#f79b8d"/><path d="M608.4 206.8 L602.5 213.5 L594.1 223.1 L584.8 233.8 L576.2 243.9 L568.4 253.2 L560.7 262.6 L553.3 271.8 L546.2 280.4 L539.7 288.6 L533.6 296.3 L527.7 303.7 L522.1 310.7 L516.6 317.4 L511.2 323.8 L506.2 329.8 L501.8 334.9 L498.4 338.9 L495.8 341.9 L493.2 344.8 L490 348.2 L485.4 352.9 L480 358.3 L475 363.2 L471.5 366.7 L472.1 374.6 L475.4 371.2 L480.2 366.4 L485.4 361 L490 356.2 L493.4 352.4 L496.4 349.1 L499.4 345.5 L503.2 341 L508 335.1 L513.4 328.3 L519.1 321.1 L524.9 313.7 L530.6 306.4 L536.4 298.9 L542.5 291.1 L549 282.9 L556 274.3 L563.5 265.2 L571.2 256 L579.1 246.7 L587.8 236.6 L597.1 225.8 L605.6 216.1 L611.4 209.4Z" fill="#ee827b"/><path d="M610.6 208.6 L604.7 215.4 L596.3 225 L586.9 235.8 L578.2 245.9 L570.4 255.2 L562.7 264.5 L555.2 273.5 L548.2 282.2 L541.7 290.4 L535.6 298.2 L529.8 305.6 L524.1 312.9 L518.4 320 L512.7 327 L507.5 333.6 L502.8 339.2 L499.1 343.6 L496.2 347.1 L493.4 350.2 L490 353.9 L485.4 358.7 L480.2 364.1 L475.3 369 L471.9 372.4 L472.5 380.3 L475.7 377 L480.4 372.2 L485.4 366.8 L490 361.9 L493.6 357.9 L496.8 354.3 L500.1 350.3 L504.2 345.3 L509.2 338.9 L514.9 331.5 L520.9 323.7 L526.9 315.9 L532.7 308.4 L538.5 300.7 L544.5 292.8 L551 284.7 L558 276 L565.5 267.1 L573.3 257.9 L581.1 248.7 L589.8 238.5 L599.3 227.7 L607.7 217.9 L613.6 211.2Z" fill="#e4716f"/><path d="M612.8 210.4 L606.9 217.2 L598.4 226.9 L589 237.7 L580.3 247.9 L572.5 257.1 L564.7 266.3 L557.2 275.3 L550.2 283.9 L543.7 292.1 L537.6 300 L531.8 307.6 L526.1 315.1 L520.2 322.7 L514.3 330.2 L508.7 337.4 L503.8 343.6 L499.8 348.4 L496.6 352.2 L493.5 355.7 L490 359.6 L485.4 364.5 L480.3 369.8 L475.6 374.7 L472.3 378.1 L472.9 386 L476 382.7 L480.5 378 L485.5 372.6 L490 367.6 L493.7 363.4 L497.2 359.4 L500.9 355 L505.2 349.6 L510.5 342.7 L516.5 334.7 L522.7 326.3 L528.9 318.1 L534.7 310.3 L540.5 302.5 L546.5 294.6 L553 286.4 L560 277.8 L567.5 268.9 L575.3 259.8 L583.2 250.7 L591.9 240.5 L601.4 229.6 L609.9 219.8 L615.8 213Z" fill="#d76768"/><path d="M615 212.2 L609 219 L600.5 228.8 L591.1 239.7 L582.3 249.9 L574.5 259 L566.7 268.2 L559.2 277.1 L552.2 285.7 L545.7 293.9 L539.7 301.8 L533.9 309.5 L528.1 317.3 L522 325.3 L515.9 333.4 L510 341.2 L504.8 347.9 L500.6 353.1 L497 357.4 L493.7 361.2 L490 365.3 L485.4 370.3 L480.4 375.6 L475.9 380.4 L472.7 383.8 L473.3 391.7 L476.3 388.5 L480.6 383.7 L485.5 378.4 L490 373.3 L493.9 368.9 L497.6 364.6 L501.6 359.8 L506.2 353.9 L511.8 346.5 L518 337.9 L524.5 329 L530.8 320.3 L536.8 312.3 L542.5 304.4 L548.5 296.4 L554.9 288.2 L562 279.6 L569.5 270.7 L577.3 261.8 L585.2 252.6 L594 242.4 L603.5 231.5 L612.1 221.6 L618 214.8Z" fill="#ca5d61"/><path d="M617.2 214 L611.2 220.9 L602.7 230.7 L593.2 241.7 L584.4 251.8 L576.5 261 L568.7 270 L561.2 278.9 L554.1 287.4 L547.7 295.7 L541.7 303.6 L535.9 311.5 L530 319.5 L523.8 327.9 L517.4 336.7 L511.3 345 L505.8 352.2 L501.3 357.9 L497.4 362.5 L493.8 366.7 L490 371 L485.5 376.1 L480.6 381.4 L476.2 386.2 L473.1 389.5 L473.7 397.4 L476.6 394.2 L480.8 389.5 L485.5 384.2 L490 379 L494 374.4 L498 369.7 L502.3 364.5 L507.2 358.2 L513 350.3 L519.6 341.1 L526.3 331.6 L532.8 322.5 L538.8 314.2 L544.6 306.2 L550.5 298.2 L556.9 289.9 L564 281.3 L571.5 272.6 L579.3 263.7 L587.3 254.6 L596.1 244.4 L605.6 233.4 L614.3 223.5 L620.2 216.6Z" fill="#b6515a"/><path d="M619.4 215.8 L613.4 222.7 L604.8 232.6 L595.3 243.6 L586.4 253.8 L578.5 262.9 L570.7 271.9 L563.2 280.6 L556.1 289.2 L549.7 297.5 L543.8 305.5 L538 313.4 L532 321.7 L525.6 330.5 L519 339.9 L512.5 348.8 L506.8 356.5 L502 362.6 L497.9 367.7 L494 372.2 L490 376.7 L485.5 381.9 L480.7 387.2 L476.5 391.9 L473.5 395.2 L474.1 403.1 L476.9 399.9 L480.9 395.3 L485.5 390 L490 384.7 L494.2 379.8 L498.4 374.9 L503 369.3 L508.2 362.6 L514.3 354.1 L521.1 344.3 L528.1 334.2 L534.8 324.7 L540.8 316.2 L546.6 308 L552.5 299.9 L558.9 291.7 L566 283.1 L573.5 274.4 L581.4 265.6 L589.3 256.6 L598.2 246.4 L607.8 235.3 L616.4 225.3 L622.4 218.4Z" fill="#994350"/></g><g filter="url(#bl2)"><path d="M559 266.3 L551.5 269.9 L543.2 267.7 L546.6 261.4 L554.9 259.3Z" fill="#c24cf0" opacity="0.62"/><path d="M567.8 284.8 L559.6 282.5 L556.6 276 L565 274.2 L572.2 278Z" fill="#c24cf0" opacity="0.62"/><path d="M546.2 298.3 L543.5 291.8 L548.1 286 L555.1 290 L555.8 296.8Z" fill="#c24cf0" opacity="0.62"/><path d="M518.8 332.5 L508.6 334.5 L500.1 329.7 L506.8 323.4 L517.3 323.3Z" fill="#c24cf0" opacity="0.62"/><path d="M498.6 345.5 L492.2 340.8 L492.6 334 L501.3 334.8 L506.1 340.6Z" fill="#c24cf0" opacity="0.62"/><path d="M507.4 349.4 L508.1 342.6 L515.2 338.6 L519.7 344.4 L517 350.9Z" fill="#c24cf0" opacity="0.62"/><path d="M532.1 304.1 L525.2 303.3 L521.6 298.6 L527.8 296.1 L534.3 298.2Z" fill="#c24cf0" opacity="0.62"/></g></g><clipPath id="cpt3"><path d="M646 245 L646 246.2 L646.1 247.7 L646.1 250.8 L646 257 L645.7 267.4 L645.2 281.1 L644.6 296 L644 310 L643.4 322.7 L642.9 335.2 L642.1 347.6 L641 360 L639.3 373.3 L637.1 387.1 L634.9 399.9 L633 410 L631.9 415.7 L631.3 418.4 L630.5 420.8 L628.7 426 L626 435 L622.7 446.2 L618.5 458.3 L613 470 L605.2 481.7 L595.7 493.9 L586.3 505.1 L579 514 L574.4 519.9 L571.4 523.8 L569.4 526.2 L568 528 L626 528 L627.2 526.2 L628.9 523.8 L631.1 519.9 L634 514 L637.9 505.1 L642.6 493.9 L647.5 481.7 L652 470 L656 458.3 L659.9 446.2 L663.4 435 L666 426 L667.4 420.8 L667.9 418.4 L668.2 415.7 L669 410 L670.6 399.9 L672.5 387.1 L674.4 373.3 L676 360 L677.1 347.6 L677.9 335.2 L678.5 322.7 L679 310 L679.4 296 L679.7 281.1 L679.9 267.4 L680 257 L680.1 250.8 L680.1 247.7 L680 246.2 L680 245Z"/></clipPath><path d="M646 245 L646 246.2 L646.1 247.7 L646.1 250.8 L646 257 L645.7 267.4 L645.2 281.1 L644.6 296 L644 310 L643.4 322.7 L642.9 335.2 L642.1 347.6 L641 360 L639.3 373.3 L637.1 387.1 L634.9 399.9 L633 410 L631.9 415.7 L631.3 418.4 L630.5 420.8 L628.7 426 L626 435 L622.7 446.2 L618.5 458.3 L613 470 L605.2 481.7 L595.7 493.9 L586.3 505.1 L579 514 L574.4 519.9 L571.4 523.8 L569.4 526.2 L568 528 L626 528 L627.2 526.2 L628.9 523.8 L631.1 519.9 L634 514 L637.9 505.1 L642.6 493.9 L647.5 481.7 L652 470 L656 458.3 L659.9 446.2 L663.4 435 L666 426 L667.4 420.8 L667.9 418.4 L668.2 415.7 L669 410 L670.6 399.9 L672.5 387.1 L674.4 373.3 L676 360 L677.1 347.6 L677.9 335.2 L678.5 322.7 L679 310 L679.4 296 L679.7 281.1 L679.9 267.4 L680 257 L680.1 250.8 L680.1 247.7 L680 246.2 L680 245Z" fill="#fba186"/><g clip-path="url(#cpt3)"><g filter="url(#bl)"><path d="M645.3 245 L645.4 246.2 L645.4 247.7 L645.5 250.8 L645.3 257 L645 267.4 L644.5 281.1 L643.9 296 L643.3 310 L642.7 322.7 L642.2 335.2 L641.4 347.6 L640.3 360 L638.6 373.3 L636.4 387.1 L634.1 399.9 L632.3 410 L631.2 415.7 L630.6 418.4 L629.8 420.8 L628 426 L625.3 435 L622 446.2 L617.7 458.3 L612.2 470 L604.4 481.7 L594.8 493.9 L585.3 505.1 L577.9 514 L573.2 519.9 L570.2 523.8 L568.3 526.2 L566.8 528 L574 528 L575.4 526.2 L577.3 523.8 L580.2 519.9 L584.7 514 L591.6 505.1 L600.6 493.9 L609.6 481.7 L617 470 L622.4 458.3 L626.6 446.2 L629.9 435 L632.6 426 L634.3 420.8 L635.1 418.4 L635.7 415.7 L636.7 410 L638.5 399.9 L640.7 387.1 L642.9 373.3 L644.6 360 L645.7 347.6 L646.5 335.2 L647.1 322.7 L647.6 310 L648.2 296 L648.8 281.1 L649.2 267.4 L649.5 257 L649.6 250.8 L649.6 247.7 L649.6 246.2 L649.5 245Z" fill="#f4926c"/><path d="M648.2 245 L648.2 246.2 L648.3 247.7 L648.3 250.8 L648.2 257 L647.8 267.4 L647.4 281.1 L646.8 296 L646.2 310 L645.7 322.7 L645.1 335.2 L644.3 347.6 L643.2 360 L641.5 373.3 L639.3 387.1 L637.1 399.9 L635.3 410 L634.2 415.7 L633.6 418.4 L632.8 420.8 L631.1 426 L628.4 435 L625.1 446.2 L620.9 458.3 L615.5 470 L607.9 481.7 L598.7 493.9 L589.6 505.1 L582.5 514 L578 519.9 L575 523.8 L573.1 526.2 L571.7 528 L578.8 528 L580.2 526.2 L582.1 523.8 L585 519.9 L589.3 514 L595.9 505.1 L604.5 493.9 L613.1 481.7 L620.3 470 L625.5 458.3 L629.7 446.2 L633 435 L635.7 426 L637.4 420.8 L638.2 418.4 L638.7 415.7 L639.7 410 L641.5 399.9 L643.7 387.1 L645.8 373.3 L647.5 360 L648.6 347.6 L649.4 335.2 L650 322.7 L650.5 310 L651.1 296 L651.6 281.1 L652 267.4 L652.3 257 L652.5 250.8 L652.5 247.7 L652.4 246.2 L652.3 245Z" fill="#fb9d78"/><path d="M651 245 L651 246.2 L651.1 247.7 L651.1 250.8 L651 257 L650.7 267.4 L650.2 281.1 L649.7 296 L649.1 310 L648.6 322.7 L648 335.2 L647.3 347.6 L646.1 360 L644.4 373.3 L642.3 387.1 L640.1 399.9 L638.3 410 L637.3 415.7 L636.7 418.4 L635.9 420.8 L634.2 426 L631.5 435 L628.2 446.2 L624 458.3 L618.7 470 L611.5 481.7 L602.6 493.9 L593.9 505.1 L587.1 514 L582.7 519.9 L579.8 523.8 L577.9 526.2 L576.5 528 L583.7 528 L585 526.2 L586.9 523.8 L589.7 519.9 L593.9 514 L600.2 505.1 L608.4 493.9 L616.7 481.7 L623.5 470 L628.6 458.3 L632.8 446.2 L636.1 435 L638.8 426 L640.5 420.8 L641.2 418.4 L641.7 415.7 L642.7 410 L644.5 399.9 L646.6 387.1 L648.8 373.3 L650.5 360 L651.6 347.6 L652.3 335.2 L652.9 322.7 L653.5 310 L654 296 L654.5 281.1 L654.9 267.4 L655.2 257 L655.3 250.8 L655.3 247.7 L655.2 246.2 L655.2 245Z" fill="#fdb391"/><path d="M653.8 245 L653.9 246.2 L653.9 247.7 L653.9 250.8 L653.8 257 L653.5 267.4 L653.1 281.1 L652.6 296 L652 310 L651.5 322.7 L650.9 335.2 L650.2 347.6 L649 360 L647.4 373.3 L645.2 387.1 L643.1 399.9 L641.3 410 L640.3 415.7 L639.8 418.4 L639 420.8 L637.3 426 L634.6 435 L631.3 446.2 L627.1 458.3 L622 470 L615 481.7 L606.5 493.9 L598.2 505.1 L591.6 514 L587.4 519.9 L584.6 523.8 L582.7 526.2 L581.3 528 L588.5 528 L589.8 526.2 L591.7 523.8 L594.4 519.9 L598.4 514 L604.5 505.1 L612.3 493.9 L620.2 481.7 L626.8 470 L631.8 458.3 L635.9 446.2 L639.2 435 L641.9 426 L643.5 420.8 L644.3 418.4 L644.8 415.7 L645.7 410 L647.5 399.9 L649.6 387.1 L651.7 373.3 L653.4 360 L654.5 347.6 L655.2 335.2 L655.8 322.7 L656.4 310 L656.9 296 L657.4 281.1 L657.7 267.4 L658 257 L658.1 250.8 L658.1 247.7 L658.1 246.2 L658 245Z" fill="#fec9ab"/><path d="M656.7 245 L656.7 246.2 L656.8 247.7 L656.8 250.8 L656.7 257 L656.4 267.4 L656 281.1 L655.5 296 L655 310 L654.4 322.7 L653.8 335.2 L653.1 347.6 L652 360 L650.3 373.3 L648.2 387.1 L646 399.9 L644.3 410 L643.3 415.7 L642.8 418.4 L642.1 420.8 L640.4 426 L637.7 435 L634.4 446.2 L630.2 458.3 L625.2 470 L618.5 481.7 L610.4 493.9 L602.5 505.1 L596.2 514 L592.2 519.9 L589.4 523.8 L587.5 526.2 L586.2 528 L593.3 528 L594.7 526.2 L596.5 523.8 L599.1 519.9 L603 514 L608.8 505.1 L616.2 493.9 L623.7 481.7 L630 470 L634.9 458.3 L639 446.2 L642.3 435 L645 426 L646.6 420.8 L647.3 418.4 L647.8 415.7 L648.7 410 L650.4 399.9 L652.5 387.1 L654.6 373.3 L656.3 360 L657.4 347.6 L658.2 335.2 L658.7 322.7 L659.3 310 L659.8 296 L660.3 281.1 L660.6 267.4 L660.8 257 L661 250.8 L660.9 247.7 L660.9 246.2 L660.8 245Z" fill="#fec0a3"/><path d="M659.5 245 L659.5 246.2 L659.6 247.7 L659.6 250.8 L659.5 257 L659.2 267.4 L658.9 281.1 L658.4 296 L657.9 310 L657.3 322.7 L656.8 335.2 L656 347.6 L654.9 360 L653.2 373.3 L651.1 387.1 L649 399.9 L647.3 410 L646.3 415.7 L645.9 418.4 L645.1 420.8 L643.5 426 L640.8 435 L637.5 446.2 L633.4 458.3 L628.5 470 L622 481.7 L614.3 493.9 L606.8 505.1 L600.8 514 L596.9 519.9 L594.2 523.8 L592.4 526.2 L591 528 L598.2 528 L599.5 526.2 L601.3 523.8 L603.9 519.9 L607.6 514 L613.1 505.1 L620.1 493.9 L627.2 481.7 L633.3 470 L638 458.3 L642.1 446.2 L645.4 435 L648.1 426 L649.7 420.8 L650.4 418.4 L650.8 415.7 L651.7 410 L653.4 399.9 L655.5 387.1 L657.6 373.3 L659.2 360 L660.3 347.6 L661.1 335.2 L661.7 322.7 L662.2 310 L662.7 296 L663.1 281.1 L663.4 267.4 L663.7 257 L663.8 250.8 L663.8 247.7 L663.7 246.2 L663.7 245Z" fill="#fda88b"/><path d="M662.3 245 L662.4 246.2 L662.4 247.7 L662.4 250.8 L662.3 257 L662.1 267.4 L661.7 281.1 L661.3 296 L660.8 310 L660.3 322.7 L659.7 335.2 L658.9 347.6 L657.8 360 L656.1 373.3 L654.1 387.1 L652 399.9 L650.3 410 L649.4 415.7 L648.9 418.4 L648.2 420.8 L646.6 426 L643.9 435 L640.6 446.2 L636.5 458.3 L631.7 470 L625.6 481.7 L618.2 493.9 L611.1 505.1 L605.4 514 L601.6 519.9 L599 523.8 L597.2 526.2 L595.8 528 L603 528 L604.3 526.2 L606.1 523.8 L608.6 519.9 L612.2 514 L617.4 505.1 L624 493.9 L630.8 481.7 L636.5 470 L641.1 458.3 L645.2 446.2 L648.5 435 L651.2 426 L652.8 420.8 L653.4 418.4 L653.8 415.7 L654.7 410 L656.4 399.9 L658.5 387.1 L660.5 373.3 L662.1 360 L663.2 347.6 L664 335.2 L664.6 322.7 L665.1 310 L665.6 296 L666 281.1 L666.3 267.4 L666.5 257 L666.6 250.8 L666.6 247.7 L666.5 246.2 L666.5 245Z" fill="#f99a80"/><path d="M665.2 245 L665.2 246.2 L665.2 247.7 L665.3 250.8 L665.2 257 L664.9 267.4 L664.6 281.1 L664.2 296 L663.7 310 L663.2 322.7 L662.6 335.2 L661.8 347.6 L660.7 360 L659.1 373.3 L657 387.1 L655 399.9 L653.3 410 L652.4 415.7 L652 418.4 L651.3 420.8 L649.7 426 L647.1 435 L643.7 446.2 L639.6 458.3 L635 470 L629.1 481.7 L622.1 493.9 L615.4 505.1 L610 514 L606.3 519.9 L603.8 523.8 L602 526.2 L600.7 528 L607.8 528 L609.1 526.2 L610.9 523.8 L613.3 519.9 L616.8 514 L621.7 505.1 L627.9 493.9 L634.3 481.7 L639.8 470 L644.3 458.3 L648.3 446.2 L651.7 435 L654.3 426 L655.9 420.8 L656.5 418.4 L656.9 415.7 L657.7 410 L659.4 399.9 L661.4 387.1 L663.4 373.3 L665 360 L666.1 347.6 L666.9 335.2 L667.5 322.7 L668 310 L668.5 296 L668.9 281.1 L669.2 267.4 L669.3 257 L669.4 250.8 L669.4 247.7 L669.4 246.2 L669.3 245Z" fill="#f58a75"/><path d="M668 245 L668 246.2 L668.1 247.7 L668.1 250.8 L668 257 L667.8 267.4 L667.5 281.1 L667.1 296 L666.6 310 L666.1 322.7 L665.5 335.2 L664.7 347.6 L663.6 360 L662 373.3 L660 387.1 L657.9 399.9 L656.3 410 L655.4 415.7 L655 418.4 L654.4 420.8 L652.8 426 L650.2 435 L646.8 446.2 L642.8 458.3 L638.2 470 L632.6 481.7 L626 493.9 L619.7 505.1 L614.6 514 L611.1 519.9 L608.6 523.8 L606.8 526.2 L605.5 528 L612.7 528 L613.9 526.2 L615.6 523.8 L618.1 519.9 L621.4 514 L626 505.1 L631.8 493.9 L637.8 481.7 L643 470 L647.4 458.3 L651.4 446.2 L654.8 435 L657.4 426 L658.9 420.8 L659.5 418.4 L659.9 415.7 L660.7 410 L662.4 399.9 L664.4 387.1 L666.3 373.3 L668 360 L669 347.6 L669.8 335.2 L670.4 322.7 L671 310 L671.4 296 L671.8 281.1 L672 267.4 L672.2 257 L672.3 250.8 L672.3 247.7 L672.2 246.2 L672.2 245Z" fill="#e97a6c"/><path d="M670.8 245 L670.8 246.2 L670.9 247.7 L670.9 250.8 L670.8 257 L670.6 267.4 L670.4 281.1 L670 296 L669.5 310 L669 322.7 L668.4 335.2 L667.6 347.6 L666.5 360 L664.9 373.3 L662.9 387.1 L660.9 399.9 L659.3 410 L658.4 415.7 L658.1 418.4 L657.5 420.8 L655.9 426 L653.3 435 L649.9 446.2 L645.9 458.3 L641.5 470 L636.1 481.7 L630 493.9 L624 505.1 L619.1 514 L615.8 519.9 L613.4 523.8 L611.6 526.2 L610.3 528 L617.5 528 L618.7 526.2 L620.4 523.8 L622.8 519.9 L625.9 514 L630.3 505.1 L635.7 493.9 L641.3 481.7 L646.3 470 L650.5 458.3 L654.5 446.2 L657.9 435 L660.5 426 L662 420.8 L662.6 418.4 L662.9 415.7 L663.7 410 L665.3 399.9 L667.3 387.1 L669.3 373.3 L670.9 360 L672 347.6 L672.7 335.2 L673.3 322.7 L673.9 310 L674.3 296 L674.6 281.1 L674.9 267.4 L675 257 L675.1 250.8 L675.1 247.7 L675 246.2 L675 245Z" fill="#da6a62"/><path d="M673.7 245 L673.7 246.2 L673.7 247.7 L673.7 250.8 L673.7 257 L673.5 267.4 L673.2 281.1 L672.9 296 L672.5 310 L671.9 322.7 L671.3 335.2 L670.6 347.6 L669.5 360 L667.9 373.3 L665.9 387.1 L663.9 399.9 L662.3 410 L661.5 415.7 L661.1 418.4 L660.5 420.8 L659 426 L656.4 435 L653 446.2 L649 458.3 L644.7 470 L639.7 481.7 L633.9 493.9 L628.3 505.1 L623.7 514 L620.5 519.9 L618.1 523.8 L616.4 526.2 L615.2 528 L622.3 528 L623.5 526.2 L625.2 523.8 L627.5 519.9 L630.5 514 L634.6 505.1 L639.7 493.9 L644.9 481.7 L649.5 470 L653.7 458.3 L657.6 446.2 L661 435 L663.6 426 L665.1 420.8 L665.6 418.4 L665.9 415.7 L666.7 410 L668.3 399.9 L670.3 387.1 L672.2 373.3 L673.8 360 L674.9 347.6 L675.7 335.2 L676.3 322.7 L676.8 310 L677.2 296 L677.5 281.1 L677.7 267.4 L677.8 257 L677.9 250.8 L677.9 247.7 L677.9 246.2 L677.8 245Z" fill="#c45958"/><path d="M676.5 245 L676.5 246.2 L676.6 247.7 L676.6 250.8 L676.5 257 L676.3 267.4 L676.1 281.1 L675.8 296 L675.4 310 L674.9 322.7 L674.3 335.2 L673.5 347.6 L672.4 360 L670.8 373.3 L668.8 387.1 L666.9 399.9 L665.3 410 L664.5 415.7 L664.2 418.4 L663.6 420.8 L662.1 426 L659.5 435 L656.1 446.2 L652.2 458.3 L648 470 L643.2 481.7 L637.8 493.9 L632.6 505.1 L628.3 514 L625.2 519.9 L622.9 523.8 L621.2 526.2 L620 528 L627.2 528 L628.4 526.2 L630 523.8 L632.2 519.9 L635.1 514 L638.9 505.1 L643.6 493.9 L648.4 481.7 L652.8 470 L656.8 458.3 L660.7 446.2 L664.1 435 L666.7 426 L668.2 420.8 L668.7 418.4 L669 415.7 L669.7 410 L671.3 399.9 L673.2 387.1 L675.1 373.3 L676.7 360 L677.8 347.6 L678.6 335.2 L679.2 322.7 L679.7 310 L680.1 296 L680.4 281.1 L680.6 267.4 L680.7 257 L680.7 250.8 L680.7 247.7 L680.7 246.2 L680.7 245Z" fill="#a1474c"/></g><g filter="url(#bl2)"><path d="M674 306.9 L666.1 309.9 L658.1 307.1 L662.3 301.1 L670.8 299.7Z" fill="#c24cf0" opacity="0.62"/><path d="M676.1 298.9 L669.8 296.5 L668.1 291.2 L675 290.2 L680.4 293.7Z" fill="#c24cf0" opacity="0.62"/><path d="M659.9 270.1 L657.7 265 L661.4 260.3 L667.1 263.5 L667.6 268.9Z" fill="#c24cf0" opacity="0.62"/><path d="M674.8 342.7 L666.1 342.3 L660.8 336.9 L668.1 333.2 L676.5 335.1Z" fill="#c24cf0" opacity="0.62"/><path d="M675.1 349.7 L671.1 345.2 L672.8 339.9 L679.4 341.7 L682 346.7Z" fill="#c24cf0" opacity="0.62"/><path d="M664.2 383.3 L656.7 386.9 L648.4 384.7 L651.8 378.4 L660.1 376.3Z" fill="#c24cf0" opacity="0.62"/><path d="M640.4 384.7 L634.4 381.9 L633.4 376.5 L640.4 376 L645.3 379.9Z" fill="#c24cf0" opacity="0.62"/><path d="M631.8 412.6 L629.9 406 L635.2 400.5 L641.7 405 L641.5 411.9Z" fill="#c24cf0" opacity="0.62"/><path d="M657.9 425.9 L647.5 427.1 L639.6 421.7 L647.1 416 L657.5 416.7Z" fill="#c24cf0" opacity="0.62"/><path d="M631.5 464.4 L623.2 459.4 L622.6 451.2 L633.1 451.4 L639.7 457.8Z" fill="#c24cf0" opacity="0.62"/><path d="M647.4 460.6 L647.2 455.1 L652.5 451.5 L656.7 455.9 L655.2 461.2Z" fill="#c24cf0" opacity="0.62"/><path d="M628.8 488.3 L620.4 493.2 L610.2 491.4 L613.2 483.6 L622.8 480.3Z" fill="#c24cf0" opacity="0.62"/><path d="M604.5 510.5 L596 508.8 L592.2 502.6 L600.4 500.1 L608.1 503.3Z" fill="#c24cf0" opacity="0.62"/></g></g><circle cx="529" cy="478" r="59.500" fill="url(#sg)"/><circle cx="529" cy="478" r="59.500" fill="#fff" filter="url(#marb)"/><circle cx="529" cy="478" r="59.500" fill="url(#sgs)"/><path d="M486 496 L515 499 L526 518 L486 518 Z" fill="#000" opacity=".9" filter="url(#bl)"/></g></defs><use href="#scene"/><rect x="569.500" y="237.500" width="20" height="19" fill="none" stroke="#f0a02c" stroke-width="1"/><rect x="589.500" y="237.500" width="19" height="19" fill="none" stroke="#f0a02c" stroke-width="1"/></svg><!--/SCENE-->
<!-- scrollbars of image area -->
<div class="a" style="left:1059px;top:86px;width:10px;height:600px;background:#414141;border-radius:5px"></div>
<div class="a" style="left:201px;top:691px;width:853px;height:11px;background:#414141;border-radius:0 5px 5px 0"></div>
<!-- vertical divider -->
<div class="a" style="left:1075px;top:83px;width:1px;height:620px;background:#333"></div>
<div class="a" style="left:1076px;top:83px;width:1px;height:620px;background:#5e5e5e"></div>
<!-- navigator panel -->
<div class="a" style="left:1076px;top:83px;width:288px;height:1px;background:#333"></div><div class="a" style="left:1077px;top:84px;width:287px;height:1px;background:#5a5a5a"></div>
<div class="tab on" style="left:1077px;top:85px;width:61px;height:18px;border-radius:4px 0 0 4px;letter-spacing:0.03px/*fit*/">Navigator</div>
<div class="tab" style="left:1138px;top:85px;width:62px;height:18px;border-radius:0 4px 4px 0;border-left:none;letter-spacing:0.01px/*fit*/">Histogram</div>
<div class="a" style="left:1139px;top:112px;width:164px;height:102px;background:#000;border:1px solid #b4b4b4"></div>
<!--NAVIMG--><!--NAVS--><svg class="a" style="left:1140px;top:113px" width="162" height="100" viewBox="1140 113 162 100"><use href="#scene" transform="translate(1138.2 111.1) scale(0.2086) translate(-232 -137)"/></svg><!--/NAVS-->
<div class="a" style="left:1082px;top:220px;width:69px;height:15px;background:#393939;border:1px solid #303030;border-radius:2px"></div>
<div class="t" style="left:1087px;top:221px;color:#c4c4c4;letter-spacing:-0.6px/*fit*/">31 %</div>
<div class="a" style="left:1144px;top:223px;width:0;height:0;border:2.5px solid transparent;border-bottom:4px solid #9a9a9a;border-top:none"></div>
<div class="a" style="left:1144px;top:228px;width:0;height:0;border:2.5px solid transparent;border-top:4px solid #9a9a9a;border-bottom:none"></div>
<div class="a" style="left:1152px;top:220px;width:181px;height:15px;background:#3a3a3a;border-radius:0 3px 3px 0"></div>
<div class="a" style="left:1152px;top:220px;width:24px;height:15px;background:#8e8e8e"></div>
<div class="a" style="left:1176px;top:220px;width:2px;height:15px;background:#f4a41c"></div>
<div class="a" style="left:1242px;top:230px;width:1px;height:4px;background:#b07818"></div>
<div class="a" style="left:1340px;top:219px;width:17px;height:17px;border-radius:50%;background:linear-gradient(#8a8a8a,#6a6a6a);border:1px solid #3a3a3a"></div>
<div class="a" style="left:1347px;top:224px;width:0;height:0;border:3.500px solid transparent;border-left:5px solid #e8e8e8;border-right:none"></div>
<div class="a" style="left:1076px;top:241px;width:288px;height:1px;background:#333"></div>
<div class="a" style="left:1076px;top:242px;width:288px;height:1px;background:#5a5a5a"></div>
<div class="a" style="left:1076px;top:246px;width:288px;height:1px;background:#333"></div><div class="a" style="left:1077px;top:247px;width:287px;height:1px;background:#5a5a5a"></div>
<!-- history tabs -->
<div class="tab on" style="left:1079px;top:250px;width:45px;height:18px;border-radius:4px 0 0 4px;letter-spacing:-0.01px/*fit*/">History</div>
<div class="tab" style="left:1123px;top:250px;width:44px;height:18px;border-left:none;letter-spacing:0.32px/*fit*/">Info</div>
<div class="tab" style="left:1167px;top:250px;width:44px;height:18px;border-left:none;letter-spacing:-0.57px/*fit*/">Layer</div>
<div class="tab" style="left:1211px;top:250px;width:44px;height:18px;border-left:none;letter-spacing:0.02px/*fit*/">Filter</div>
<div class="tab" style="left:1255px;top:250px;width:44px;height:18px;border-left:none;border-radius:0 4px 4px 0;letter-spacing:-0.34px/*fit*/">Stereo</div>
<div class="a" style="left:1083px;top:276px;width:272px;height:15px;background:#393939"></div>
<div class="t" style="left:1085px;top:277px;color:#cacaca;font-weight:bold;font-size:11px;letter-spacing:-0.34px/*fit*/">History</div>
<!-- list -->
<div class="a" style="left:1083px;top:296px;width:270px;height:384px;background:#464646;border:1px solid #5a5a5a;border-top-color:#333;border-left-color:#333"></div>
<div class="a" style="left:1083px;top:296px;width:270px;height:17px;background:#4a4a4a;border-bottom:1px solid #2e2e2e;border-top:1px solid #747474;border-left:1px solid #747474"></div>
<div class="a" style="left:1234px;top:297px;width:2px;height:15px;background:linear-gradient(90deg,#2e2e2e 50%,#666 50%)"></div>
<div class="a" style="left:1252px;top:297px;width:2px;height:15px;background:linear-gradient(90deg,#2e2e2e 50%,#666 50%)"></div>
<div class="a" style="left:1323px;top:297px;width:2px;height:15px;background:linear-gradient(90deg,#2e2e2e 50%,#666 50%)"></div>
<div class="a" style="left:1345px;top:297px;width:2px;height:15px;background:linear-gradient(90deg,#2e2e2e 50%,#666 50%)"></div>
<div class="t" style="left:1088px;top:298px;color:#c8c8c8;letter-spacing:-0.6px/*fit*/">Name</div>
<div class="t" style="left:1239px;top:298px;color:#c8c8c8">R</div>
<div class="t" style="left:1258px;top:298px;color:#c8c8c8;letter-spacing:-0.34px/*fit*/">Render Time</div>
<div class="t" style="left:1328px;top:298px;color:#c8c8c8">F</div>
<div class="t" style="left:1350px;top:298px;color:#c8c8c8;width:3px;overflow:hidden">I</div>
<div class="a" style="left:1084px;top:313px;width:268px;height:20px;background:#555"></div>
<div class="a" style="left:1084px;top:333px;width:268px;height:20px;background:#434343"></div>
<div class="a" style="left:1084px;top:353px;width:268px;height:20px;background:#555"></div>
<div class="a" style="left:1084px;top:373px;width:268px;height:20px;background:#6a6a6a"></div>
<!-- tree lines -->
<div class="a" style="left:1096px;top:313px;width:1px;height:70px;background:#707070"></div>
<div class="a" style="left:1096px;top:323px;width:8px;height:1px;background:#707070"></div>
<div class="a" style="left:1096px;top:343px;width:8px;height:1px;background:#707070"></div>
<div class="a" style="left:1096px;top:363px;width:8px;height:1px;background:#707070"></div>
<div class="a" style="left:1096px;top:383px;width:8px;height:1px;background:#8a8a8a"></div>
<!-- thumbs -->
<svg class="a" style="left:1104px;top:314px" width="18" height="78" viewBox="0 0 18 78">
<rect width="18" height="18" fill="#000"/><rect y="4" width="18" height="10" fill="#2a1c2c"/><path d="M1 6 l2 6 M3 5 l3 7 M12 5 l-2 7 M15 5 l1 7 M13.500 6 l2 5" stroke="#c83048" stroke-width="1.300"/><path d="M5 7 h2 v4 h2 v-5 M9.500 7 l1.500 4 l1.500 -4" stroke="#f4f4f4" stroke-width="1.300" fill="none"/><path d="M0 9 h3 M15 11 h3 M2 13 h4" stroke="#5a5a90" stroke-width="1.400"/>
<rect y="20" width="18" height="18" fill="#000"/><path d="M3 32.500 Q9 31 17 29.500 L17 31 Q10 33.500 3 33.500 Z" fill="#f4e460"/><path d="M8 31.500 L13 26 L14.500 25 L13.500 27.500 L10.500 31.500 Z" fill="#e8d850"/><circle cx="15" cy="24" r=".6" fill="#f4e460"/>
<rect y="40" width="18" height="18" fill="#000"/><path d="M7 46 Q9.500 44 11.500 46.500 Q12.500 49 10.500 51 M7 47 Q6 50 8 52" fill="none" stroke="#e8a0a0" stroke-width="1.300"/><circle cx="9.500" cy="47.500" r="1.600" fill="#fff"/><path d="M10 51 l1 2.500 M13.500 53.500 h1.500" stroke="#c86068" stroke-width="1"/>
<rect x="3.500" y="60.500" width="11" height="17" rx="1.500" fill="#ee5a5a" stroke="#701c1c" stroke-width=".8"/><path d="M2 63 v13 M16 63 v13" stroke="#f0f0f0" stroke-width="1.600" stroke-dasharray="1.600 2"/>
</svg>
<div class="t" style="left:1125px;top:317px;color:#c8c8c8;letter-spacing:0.0px/*fit*/">new1451.png</div>
<div class="t" style="left:1125px;top:337px;color:#c8c8c8;letter-spacing:0.0px/*fit*/">new1452.png</div>
<div class="t" style="left:1125px;top:357px;color:#c8c8c8;letter-spacing:-0.18px/*fit*/">new1453_0051.png</div>
<div class="t" style="left:1125px;top:377px;color:#c8c8c8;letter-spacing:0.0px/*fit*/">new1454.png</div>
<div class="a" style="left:1239px;top:318px;width:10px;height:10px;border-radius:50%;background:#3fe08a"></div>
<div class="a" style="left:1239px;top:338px;width:10px;height:10px;border-radius:50%;background:#3fe08a"></div>
<div class="a" style="left:1239px;top:358px;width:10px;height:10px;border-radius:50%;background:#3fe08a"></div>
<div class="a" style="left:1239px;top:378px;width:10px;height:10px;border-radius:50%;background:#f4a41c"></div>
<div class="t" style="left:1258px;top:317px;color:#c8c8c8;letter-spacing:-0.37px/*fit*/">00:04:26</div>
<div class="t" style="left:1258px;top:337px;color:#c8c8c8;letter-spacing:-0.37px/*fit*/">00:01:06</div>
<div class="t" style="left:1258px;top:357px;color:#c8c8c8;letter-spacing:-0.37px/*fit*/">00:02:36</div>
<div class="t" style="left:1331px;top:317px;color:#c8c8c8">0</div>
<div class="t" style="left:1331px;top:337px;color:#c8c8c8">0</div>
<div class="t" style="left:1331px;top:357px;color:#c8c8c8;letter-spacing:-0.6px/*fit*/">51</div>
<div class="t" style="left:1331px;top:377px;color:#c8c8c8">0</div>
<!-- list h-scrollbar -->
<div class="a" style="left:1084px;top:683px;width:268px;height:11px;background:#333;border-radius:5px"></div>
<div class="a" style="left:1094px;top:684px;width:199px;height:9px;background:#727272;border-radius:4px"></div>
<div class="a" style="left:1087px;top:685px;width:0;height:0;border:3.500px solid transparent;border-right:6px solid #b8b8b8;border-left:none"></div>
<div class="a" style="left:1343px;top:685px;width:0;height:0;border:3.500px solid transparent;border-left:6px solid #b8b8b8;border-right:none"></div>
<!-- bottom bar --><div class="a" style="left:1077px;top:701px;width:287px;height:1px;background:#353535"></div><div class="a" style="left:1077px;top:702px;width:287px;height:1px;background:#5a5a5a"></div>
<div class="a" style="left:201px;top:703px;width:1163px;height:1px;background:#333"></div>
<div class="a" style="left:201px;top:704px;width:1163px;height:1px;background:#666"></div>
<div class="a" style="left:204px;top:708px;width:69px;height:16px;background:#393939;border:1px solid #2e2e2e;border-radius:2px"></div>
<div class="t" style="left:209px;top:710px;color:#c4c4c4;letter-spacing:-0.6px/*fit*/">31 %</div>
<div class="a" style="left:265px;top:711px;width:0;height:0;border:2.500px solid transparent;border-bottom:4px solid #9a9a9a;border-top:none"></div>
<div class="a" style="left:265px;top:717px;width:0;height:0;border:2.500px solid transparent;border-top:4px solid #9a9a9a;border-bottom:none"></div>
<div class="a" style="left:279px;top:707px;width:18px;height:18px;border-radius:50%;background:linear-gradient(#8a8a8a,#6a6a6a);border:1px solid #3a3a3a"></div>
<div class="a" style="left:286px;top:712px;width:0;height:0;border:3.500px solid transparent;border-left:5px solid #e8e8e8;border-right:none"></div>
<div class="a" style="left:306px;top:711px;width:80px;height:10px;background:#4a4a4a;border:1px solid #2e2e2e"></div>
<div class="a" style="left:308px;top:713px;width:14px;height:6px;background:#8fb0e0"></div>
<div class="t" style="left:389px;top:710px;color:#c4c4c4;letter-spacing:-0.6px/*fit*/">00:00:21</div>
<div class="a" style="left:521px;top:708px;width:1px;height:17px;background:#2e2e2e"></div>
<div class="a" style="left:522px;top:708px;width:1px;height:17px;background:#666"></div>
<div class="t" style="left:527px;top:710px;color:#c4c4c4;letter-spacing:-0.43px/*fit*/">Size: 2560x1600, RGB (32 Bit)</div>
</body></html>
